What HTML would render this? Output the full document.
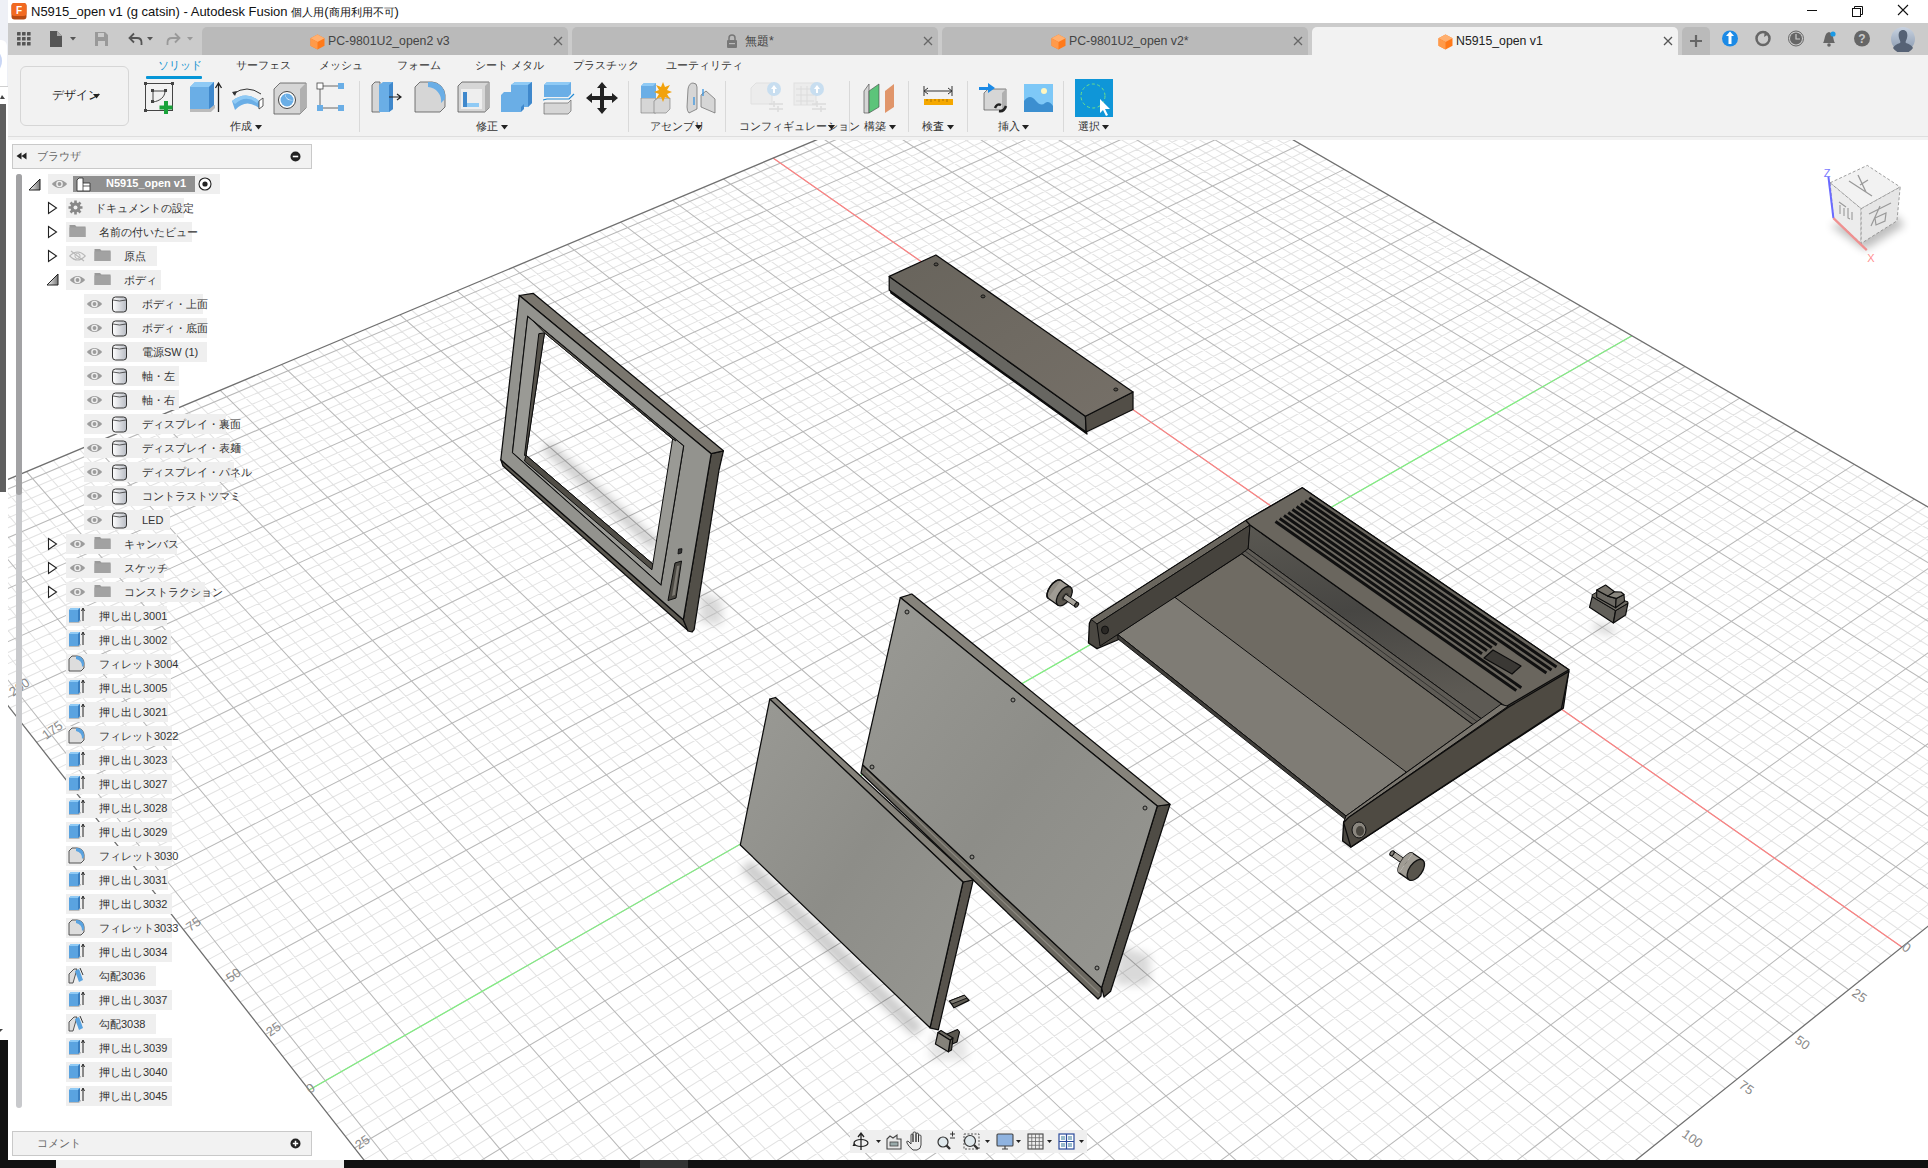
<!DOCTYPE html><html><head><meta charset="utf-8"><style>
html,body{margin:0;padding:0;width:1928px;height:1168px;overflow:hidden;background:#fff;font-family:"Liberation Sans",sans-serif}
.t{position:absolute;white-space:nowrap;line-height:1;font-family:"Liberation Sans",sans-serif}
</style></head><body>
<svg width="1928" height="1168" viewBox="0 0 1928 1168" style="position:absolute;left:0;top:0">
<defs><filter id="blur8" x="-50%" y="-50%" width="200%" height="200%"><feGaussianBlur stdDeviation="7"/></filter><filter id="blur4" x="-50%" y="-50%" width="200%" height="200%"><feGaussianBlur stdDeviation="4"/></filter><linearGradient id="gPanel" x1="0" y1="0" x2="1" y2="1"><stop offset="0" stop-color="#9a9a95"/><stop offset="0.5" stop-color="#8d8d88"/><stop offset="1" stop-color="#979792"/></linearGradient><linearGradient id="gKb" x1="0" y1="0" x2="1" y2="1"><stop offset="0" stop-color="#68645c"/><stop offset="1" stop-color="#767068"/></linearGradient><linearGradient id="gFloor" x1="0" y1="0" x2="1" y2="0.3"><stop offset="0" stop-color="#77736b"/><stop offset="1" stop-color="#817d76"/></linearGradient><linearGradient id="gBand" x1="0" y1="0" x2="0.2" y2="1"><stop offset="0" stop-color="#5a5852"/><stop offset="0.5" stop-color="#474643"/><stop offset="1" stop-color="#5d5a54"/></linearGradient></defs>
<path d="M-113.9 550.2L1107.7 32.6M-108.1 557.6L1115.3 37.0M-102.3 565.0L1122.9 41.4M-96.4 572.5L1130.5 45.8M-84.6 587.7L1145.9 54.7M-78.6 595.3L1153.7 59.2M-72.5 603.0L1161.5 63.7M-66.5 610.8L1169.4 68.3M-54.2 626.4L1185.2 77.4M-48.0 634.3L1193.2 82.1M-41.8 642.3L1201.2 86.7M-35.5 650.3L1209.3 91.3M-22.8 666.5L1225.5 100.7M-16.4 674.7L1233.7 105.5M-9.9 682.9L1241.9 110.2M-3.4 691.2L1250.2 115.0M9.7 708.0L1266.9 124.7M16.4 716.5L1275.3 129.5M23.1 725.0L1283.7 134.4M29.8 733.6L1292.2 139.3M43.4 751.0L1309.4 149.2M50.3 759.8L1318.0 154.2M57.2 768.6L1326.7 159.3M64.2 777.6L1335.4 164.3M78.4 795.6L1353.0 174.5M85.5 804.7L1361.9 179.6M92.7 813.9L1370.8 184.8M99.9 823.1L1379.8 190.0M114.6 841.8L1397.9 200.4M122.0 851.3L1407.0 205.7M129.4 860.8L1416.2 211.0M137.0 870.4L1425.5 216.4M152.2 889.8L1444.1 227.1M159.9 899.6L1453.5 232.6M167.6 909.5L1462.9 238.0M175.4 919.5L1472.4 243.5M191.2 939.6L1491.5 254.6M199.2 949.8L1501.2 260.2M207.3 960.1L1510.9 265.8M215.4 970.5L1520.7 271.4M231.8 991.4L1540.4 282.8M240.1 1002.0L1550.3 288.6M248.5 1012.7L1560.3 294.4M257.0 1023.5L1570.4 300.2M274.0 1045.3L1590.7 311.9M282.7 1056.4L1600.9 317.8M291.4 1067.5L1611.2 323.8M300.2 1078.7L1621.6 329.8M318.0 1101.4L1642.5 341.9M327.0 1112.9L1653.0 348.0M336.1 1124.5L1663.7 354.1M345.3 1136.2L1674.3 360.3M363.8 1159.9L1695.9 372.7M373.2 1171.9L1706.7 379.0M382.7 1184.0L1717.7 385.3M392.2 1196.1L1728.7 391.7M411.6 1220.8L1750.9 404.5M421.4 1233.3L1762.1 411.0M431.2 1246.0L1773.4 417.5M441.2 1258.7L1784.7 424.1M461.4 1284.5L1807.7 437.4M471.7 1297.5L1819.2 444.0M482.0 1310.7L1830.9 450.8M492.4 1324.0L1842.6 457.6M513.5 1350.9L1866.2 471.2M524.2 1364.6L1878.2 478.1M535.0 1378.4L1890.2 485.1M545.9 1392.3L1902.3 492.1M568.0 1420.4L1926.7 506.2M579.2 1434.7L1939.0 513.3M590.5 1449.1L1951.4 520.5M601.9 1463.7L1963.9 527.7M625.0 1493.2L1989.1 542.3M636.7 1508.2L2001.9 549.7M648.5 1523.3L2014.7 557.1M660.5 1538.5L2027.6 564.5M684.7 1569.4L2053.7 579.6M697.0 1585.1L2066.8 587.2M709.4 1601.0L2080.1 594.9M722.0 1617.0L2093.4 602.6M747.4 1649.4L2120.4 618.2M760.3 1665.9L2134.0 626.1M773.4 1682.6L2147.7 634.0M786.5 1699.4L2161.5 642.0M813.2 1733.5L2189.5 658.1M826.8 1750.8L2203.5 666.3M840.5 1768.3L2217.7 674.5M-97.1 523.7L890.3 1757.1M-83.1 517.8L908.1 1742.9M-69.2 511.9L925.7 1728.8M-55.3 506.1L943.2 1714.8M-27.7 494.5L977.7 1687.2M-14.1 488.8L994.8 1673.5M-0.5 483.1L1011.7 1660.0M13.0 477.4L1028.5 1646.5M39.9 466.1L1061.7 1620.0M53.2 460.5L1078.0 1606.8M66.4 455.0L1094.3 1593.8M79.6 449.4L1110.4 1580.9M105.7 438.4L1142.3 1555.4M118.7 433.0L1158.1 1542.7M131.6 427.6L1173.7 1530.2M144.5 422.2L1189.2 1517.8M170.0 411.5L1219.9 1493.2M182.6 406.2L1235.1 1481.1M195.2 400.9L1250.1 1469.0M207.7 395.6L1265.1 1457.1M232.6 385.2L1294.6 1433.4M245.0 380.0L1309.2 1421.7M257.2 374.8L1323.7 1410.1M269.5 369.7L1338.1 1398.6M293.7 359.5L1366.6 1375.8M305.8 354.4L1380.7 1364.5M317.7 349.4L1394.6 1353.3M329.7 344.4L1408.5 1342.2M353.3 334.4L1436.0 1320.2M365.1 329.5L1449.5 1309.4M376.8 324.6L1463.0 1298.6M388.4 319.7L1476.4 1287.8M411.5 310.0L1502.9 1266.6M423.0 305.2L1516.0 1256.1M434.4 300.4L1529.0 1245.7M445.8 295.6L1541.9 1235.4M468.4 286.1L1567.5 1214.9M479.6 281.4L1580.1 1204.8M490.7 276.7L1592.7 1194.7M501.8 272.1L1605.2 1184.7M523.9 262.8L1629.9 1165.0M534.8 258.2L1642.1 1155.2M545.7 253.7L1654.2 1145.5M556.5 249.1L1666.3 1135.8M578.1 240.1L1690.1 1116.7M588.8 235.6L1702.0 1107.2M599.4 231.1L1713.7 1097.8M610.0 226.6L1725.4 1088.5M631.0 217.8L1748.4 1070.0M641.5 213.4L1759.9 1060.8M651.9 209.0L1771.2 1051.8M662.3 204.7L1782.5 1042.7M682.8 196.1L1804.8 1024.8M693.0 191.8L1815.9 1016.0M703.2 187.5L1826.9 1007.2M713.3 183.2L1837.8 998.4M733.4 174.8L1859.4 981.1M743.4 170.6L1870.2 972.5M753.4 166.4L1880.8 964.0M763.3 162.3L1891.4 955.5M783.0 154.0L1912.3 938.8M792.7 149.9L1922.7 930.5M802.5 145.8L1933.0 922.2M812.1 141.7L1943.3 914.0M831.4 133.7L1963.6 897.7M840.9 129.6L1973.6 889.7M850.5 125.6L1983.6 881.7M859.9 121.7L1993.6 873.7M878.8 113.8L2013.2 858.0M888.1 109.8L2023.0 850.1M897.4 105.9L2032.7 842.4M906.7 102.0L2042.3 834.7M925.1 94.3L2061.4 819.4M934.3 90.4L2070.9 811.8M943.4 86.6L2080.3 804.3M952.5 82.8L2089.7 796.8M970.5 75.2L2108.2 781.9M979.5 71.5L2117.4 774.6M988.4 67.7L2126.5 767.3M997.3 64.0L2135.6 760.0M1015.0 56.6L2153.6 745.6M1023.7 52.9L2162.5 738.4M1032.5 49.2L2171.4 731.3M1041.2 45.5L2180.2 724.3M1058.5 38.3L2197.7 710.3M1067.1 34.7L2206.3 703.3M1075.6 31.1L2215.0 696.4M1084.2 27.5L2223.5 689.6" stroke="#e3e3e3" stroke-width="1.05" fill="none"/>
<path d="M-119.7 542.8L1100.1 28.3M-90.5 580.1L1138.2 50.3M-60.4 618.6L1177.3 72.9M-29.2 658.4L1217.4 96.0M3.1 699.6L1258.5 119.8M36.6 742.3L1300.8 144.3M71.3 786.5L1344.2 169.4M107.2 832.4L1388.8 195.2M144.5 880.1L1434.7 221.7M183.3 929.5L1481.9 249.0M223.6 980.9L1530.5 277.1M265.5 1034.4L1580.5 306.0M309.1 1090.0L1632.0 335.8M354.5 1148.0L1685.1 366.5M401.9 1208.4L1739.8 398.1M451.3 1271.5L1796.2 430.7M502.9 1337.4L1854.4 464.4M556.9 1406.3L1914.4 499.1M613.4 1478.4L1976.5 535.0M672.5 1553.9L2040.6 572.0M734.6 1633.1L2106.9 610.4M799.8 1716.3L2175.5 650.0M-111.2 529.6L872.4 1771.5M-41.5 500.3L960.5 1700.9M26.5 471.7L1045.1 1633.2M92.7 443.9L1126.4 1568.1M157.3 416.8L1204.6 1505.5M220.2 390.4L1279.9 1445.2M281.6 364.6L1352.4 1387.1M341.5 339.4L1422.3 1331.2M400.0 314.8L1489.7 1277.2M457.1 290.9L1554.7 1225.1M512.9 267.4L1617.6 1174.8M567.3 244.6L1678.3 1126.2M620.5 222.2L1736.9 1079.2M672.6 200.4L1793.7 1033.7M723.4 179.0L1848.7 989.7M773.1 158.1L1901.9 947.1M821.8 137.7L1953.4 905.8M869.4 117.7L2003.4 865.8M915.9 98.1L2051.9 827.0M961.5 79.0L2098.9 789.3M1006.1 60.3L2144.6 752.8M1049.8 41.9L2189.0 717.3" stroke="#b9b9b9" stroke-width="1.05" fill="none"/>
<path d="M773.1 158.1L1901.9 947.1" stroke="#ff8080" stroke-width="1.2"/>
<path d="M309.1 1090.0L1632.0 335.8" stroke="#80f080" stroke-width="1.2"/>
<path d="M-125.4 535.5L1092.6 23.9M854.4 1785.9L2232.0 682.8M-125.4 535.5L854.4 1785.9M1092.6 23.9L2232.0 682.8" stroke="#707070" stroke-width="1.3" fill="none"/>
<text x="13" y="697" font-family="Liberation Sans" font-size="13" fill="#8a8a8a" transform="rotate(-35 13 697)">200</text>
<text x="46" y="740" font-family="Liberation Sans" font-size="13" fill="#8a8a8a" transform="rotate(-35 46 740)">175</text>
<text x="190" y="932" font-family="Liberation Sans" font-size="13" fill="#8a8a8a" transform="rotate(-35 190 932)">75</text>
<text x="230" y="983" font-family="Liberation Sans" font-size="13" fill="#8a8a8a" transform="rotate(-35 230 983)">50</text>
<text x="270" y="1037" font-family="Liberation Sans" font-size="13" fill="#8a8a8a" transform="rotate(-35 270 1037)">25</text>
<text x="310" y="1094" font-family="Liberation Sans" font-size="13" fill="#8a8a8a" transform="rotate(-35 310 1094)">0</text>
<text x="359" y="1150" font-family="Liberation Sans" font-size="13" fill="#8a8a8a" transform="rotate(-35 359 1150)">25</text>
<text x="1901" y="949" font-family="Liberation Sans" font-size="13" fill="#8a8a8a" transform="rotate(35 1901 949)">0</text>
<text x="1851" y="995" font-family="Liberation Sans" font-size="13" fill="#8a8a8a" transform="rotate(35 1851 995)">25</text>
<text x="1794" y="1042" font-family="Liberation Sans" font-size="13" fill="#8a8a8a" transform="rotate(35 1794 1042)">50</text>
<text x="1738" y="1087" font-family="Liberation Sans" font-size="13" fill="#8a8a8a" transform="rotate(35 1738 1087)">75</text>
<text x="1681" y="1136" font-family="Liberation Sans" font-size="13" fill="#8a8a8a" transform="rotate(35 1681 1136)">100</text>
<g fill="#000" filter="url(#blur4)">
<path d="M750.6 859.4L923.6 1026.4L913.9 1036.5L740.9 869.5Z" opacity="0.2"/>
<path d="M542.0 449.8L652.0 549.8L659.4 541.6L549.4 441.6Z" opacity="0.2"/>
<path d="M700 592L722 600L722 625L700 622Z" opacity="0.15"/>
<path d="M1118 945L1150 955L1150 985L1115 985Z" opacity="0.15"/>
<path d="M1595 622L1618 628L1610 636L1592 630Z" opacity="0.15"/>
<path d="M930 1035L965 1035L968 1060L930 1060Z" opacity="0.1"/>
</g>
<path d="M500.8 459.7L683.3 619.7L688.0 630.5L503.0 466.0Z" fill="#5c5951" stroke="#0c0c0c" stroke-width="1.25" stroke-linejoin="round" />
<path d="M711.2 453.7L723.4 450.8L719.0 470.0L694.1 629.6L692.0 632.0L688.0 631.0L683.3 619.7Z" fill="#524f48" stroke="#0c0c0c" stroke-width="1.25" stroke-linejoin="round" />
<path d="M519.3 295.5L533.1 293.3L723.4 450.8L711.2 453.7Z" fill="#7a766e" stroke="#0c0c0c" stroke-width="1.25" stroke-linejoin="round" />
<path d="M519.3 295.5L711.2 453.7L683.3 619.7L500.8 459.7ZM527.7 316.6L683.6 445.9L660.9 584.7L512.5 452.5Z" fill="#93938e" fill-rule="evenodd" stroke="#0c0c0c" stroke-width="1.25"/>
<path d="M527.7 316.6L683.6 445.9L660.9 584.7L512.5 452.5ZM544.5 332.9L672.6 439.0L652.8 564.0L526.0 455.2Z" fill="#9a9a95" fill-rule="evenodd" stroke="#0c0c0c" stroke-width="1"/>
<path d="M538.8 333.7L544.5 332.9L526.0 455.2L524.5 455.5Z" fill="#55524b" stroke="#0c0c0c" stroke-width="1" stroke-linejoin="round" />
<path d="M526.0 455.2L652.8 564.0L651.9 569.8L524.5 461.0Z" fill="#504d46" stroke="#0c0c0c" stroke-width="1" stroke-linejoin="round" />
<path d="M533.0 321.0L544.5 332.9L672.6 439.0L676.0 441.0Z" fill="#6a675f" stroke="#0c0c0c" stroke-width="0.8" stroke-linejoin="round" />
<path d="M675.0 563.0L681.5 561.0L676.0 598.0L668.0 600.5Z" fill="#4a4842" stroke="#0c0c0c" stroke-width="1" stroke-linejoin="round" />
<path d="M677.0 566.0L679.5 565.5L675.0 595.0L672.0 596.0Z" fill="#7d7a73" stroke="none" stroke-width="0" stroke-linejoin="round" />
<path d="M678.5 549.0L682.0 548.7L681.5 553.0L678.0 554.0Z" fill="#333" stroke="#0c0c0c" stroke-width="0.8" stroke-linejoin="round" />
<path d="M890.0 289.0L1086.0 431.0L1087.0 434.0L891.0 293.0Z" fill="#111" stroke="#0c0c0c" stroke-width="1.35" stroke-linejoin="round" />
<path d="M889.2 276.4L1085.4 416.2L1086.2 432.0L889.2 290.1Z" fill="#676661" stroke="#0c0c0c" stroke-width="1.25" stroke-linejoin="round" />
<path d="M1085.4 416.2L1133.0 392.0L1133.0 409.5L1086.2 432.0Z" fill="#524e47" stroke="#0c0c0c" stroke-width="1.25" stroke-linejoin="round" />
<path d="M889.2 276.4L935.9 255.0L1133.0 392.0L1085.4 416.2Z" fill="url(#gKb)" stroke="#0c0c0c" stroke-width="1.25" stroke-linejoin="round" />
<ellipse cx="936.1" cy="264.4" rx="2" ry="1.5" fill="#55524b" stroke="#0c0c0c" stroke-width="0.9"/>
<ellipse cx="983.0" cy="296.4" rx="2" ry="1.5" fill="#55524b" stroke="#0c0c0c" stroke-width="0.9"/>
<ellipse cx="1115.8" cy="389.5" rx="2" ry="1.5" fill="#55524b" stroke="#0c0c0c" stroke-width="0.9"/>
<path d="M862.6 764.7L1101.6 987.6L1101.0 996.0L1098.0 999.0L861.0 773.0L862.0 768.0Z" fill="#6a675f" stroke="#0c0c0c" stroke-width="1.25" stroke-linejoin="round" />
<path d="M866.0 771.0L1099.0 993.0" stroke="#8a877f" stroke-width="1.2" fill="none"/>
<path d="M1157.3 806.0L1170.0 804.3L1110.6 991.2L1104.0 997.0L1101.6 987.6Z" fill="#4f4c45" stroke="#0c0c0c" stroke-width="1.25" stroke-linejoin="round" />
<path d="M900.3 597.6L911.8 594.0L1170.0 804.3L1157.3 806.0Z" fill="#86837b" stroke="#0c0c0c" stroke-width="1.25" stroke-linejoin="round" />
<path d="M900.3 597.6L1157.3 806.0L1101.6 987.6L862.6 764.7Z" fill="url(#gPanel)" stroke="#0c0c0c" stroke-width="1.25" stroke-linejoin="round" />
<circle cx="907.0" cy="612.0" r="2" fill="#8a8a85" stroke="#0c0c0c" stroke-width="0.9"/>
<circle cx="1013.0" cy="700.0" r="2" fill="#8a8a85" stroke="#0c0c0c" stroke-width="0.9"/>
<circle cx="1145.0" cy="808.0" r="2" fill="#8a8a85" stroke="#0c0c0c" stroke-width="0.9"/>
<circle cx="872.0" cy="767.0" r="2" fill="#8a8a85" stroke="#0c0c0c" stroke-width="0.9"/>
<circle cx="972.0" cy="857.0" r="2" fill="#8a8a85" stroke="#0c0c0c" stroke-width="0.9"/>
<circle cx="1097.0" cy="968.0" r="2" fill="#8a8a85" stroke="#0c0c0c" stroke-width="0.9"/>
<path d="M963.0 882.0L973.2 880.0L938.3 1029.9L930.0 1027.8Z" fill="#57534c" stroke="#0c0c0c" stroke-width="1.25" stroke-linejoin="round" />
<path d="M769.8 699.1L775.5 697.5L973.2 880.0L963.0 882.0Z" fill="#86837b" stroke="#0c0c0c" stroke-width="1.25" stroke-linejoin="round" />
<path d="M769.8 699.1L963.0 882.0L930.0 1027.8L740.3 845.0Z" fill="url(#gPanel)" stroke="#0c0c0c" stroke-width="1.25" stroke-linejoin="round" />
<path d="M1091.3 619.4L1245.8 520.5L1302.3 487.8L1568.9 669.8L1563.3 708.1L1350.8 847.1L1342.6 841.0L1343.6 822.5L1346.0 818.0L1120.0 639.0L1097.0 648.6L1088.5 643.0L1089.4 623.2Z" fill="#4b4842" stroke="#0c0c0c" stroke-width="1.35" stroke-linejoin="round" />
<path d="M1117.7 634.5L1241.8 553.6L1473.2 724.6L1346.0 816.0Z" fill="#6f6b63" stroke="#0c0c0c" stroke-width="1.25" stroke-linejoin="round" />
<path d="M1117.7 634.5L1174.2 596.8L1406.3 772.1L1346.0 816.0Z" fill="#7f7c75" stroke="#0c0c0c" stroke-width="1" stroke-linejoin="round" />
<path d="M1117.7 634.5L1346.0 816.0L1346.0 820.0L1118.0 639.0Z" fill="#3f3d39" stroke="#0c0c0c" stroke-width="0.9" stroke-linejoin="round" />
<path d="M1091.3 619.4L1245.8 520.5L1250.0 525.0L1097.0 624.0Z" fill="#6a665e" stroke="#0c0c0c" stroke-width="1" stroke-linejoin="round" />
<path d="M1097.0 624.0L1250.0 525.0L1248.2 548.5L1241.8 553.6L1117.7 634.5L1100.0 646.0Z" fill="#46433d" stroke="#0c0c0c" stroke-width="1" stroke-linejoin="round" />
<path d="M1250.0 525.0L1505.7 706.8L1481.3 718.7L1248.2 548.5Z" fill="url(#gBand)" stroke="#0c0c0c" stroke-width="1" stroke-linejoin="round" />
<path d="M1248.2 548.5L1481.3 718.7L1473.2 724.6L1241.8 553.6Z" fill="#5e5b55" stroke="#0c0c0c" stroke-width="0.9" stroke-linejoin="round" />
<path d="M1245.0 551.0L1477.0 721.5" stroke="#222" stroke-width="0.7" fill="none"/>
<path d="M1245.8 520.5L1302.3 487.8L1568.9 669.8L1505.7 706.8L1250.0 525.0Z" fill="#6a665e" stroke="#0c0c0c" stroke-width="1.25" stroke-linejoin="round" />
<path d="M1309.3 497.7L1556.5 666.9" stroke="#101010" stroke-width="3" fill="none"/>
<path d="M1305.1 500.7L1551.5 669.9" stroke="#101010" stroke-width="3" fill="none"/>
<path d="M1300.8 503.6L1546.4 672.9" stroke="#101010" stroke-width="3" fill="none"/>
<path d="M1296.6 506.6L1496.7 644.9" stroke="#101010" stroke-width="3" fill="none"/>
<path d="M1292.4 509.6L1491.8 647.8" stroke="#101010" stroke-width="3" fill="none"/>
<path d="M1288.2 512.6L1486.9 650.8" stroke="#101010" stroke-width="3" fill="none"/>
<path d="M1284.0 515.5L1482.0 653.8" stroke="#101010" stroke-width="3" fill="none"/>
<path d="M1279.7 518.5L1521.3 687.7" stroke="#101010" stroke-width="3" fill="none"/>
<path d="M1275.5 521.5L1516.3 690.6" stroke="#101010" stroke-width="3" fill="none"/>
<path d="M1493.0 650.0L1521.0 666.0L1512.0 674.0L1484.0 658.0Z" fill="#3a3834" stroke="#0c0c0c" stroke-width="1.25" stroke-linejoin="round" />
<path d="M1500.9 704.3L1508.0 706.3L1348.8 817.3L1343.6 822.5L1346.0 816.0Z" fill="#7a766e" stroke="#0c0c0c" stroke-width="1" stroke-linejoin="round" />
<path d="M1508.0 707.4L1568.9 671.4L1561.5 708.4L1350.8 847.1L1343.6 822.5L1348.8 817.3Z" fill="#4e4a42" stroke="#0c0c0c" stroke-width="1.25" stroke-linejoin="round" />
<ellipse cx="1105" cy="630" rx="3.5" ry="4" fill="#2a2825" stroke="#0c0c0c" stroke-width="0.9"/>
<ellipse cx="1359" cy="830" rx="7" ry="8" fill="#8a867e" stroke="#111" stroke-width="1"/><ellipse cx="1360" cy="831" rx="4" ry="5" fill="#4a4740"/>
<g transform="translate(1064.3,596.2) rotate(35)"><path d="M-12 -11H0V11H-12Z" fill="#9b978f"/><ellipse cx="-12" cy="0" rx="5" ry="11" fill="#8f8b83" stroke="#111" stroke-width="1.3"/><path d="M-12 -11H0V11H-12Z" fill="#a09c94"/><path d="M-12 -11H0M-12 11H0" stroke="#111" stroke-width="1.3"/><path d="M-17 0A5 11 0 0 1 -12 -11" fill="none" stroke="#111" stroke-width="1.3"/><path d="M-17 0A5 11 0 0 0 -12 11" fill="none" stroke="#111" stroke-width="1.3"/><ellipse cx="0" cy="0" rx="6" ry="11" fill="#5a564e" stroke="#111" stroke-width="1.3"/><ellipse cx="1" cy="0" rx="2.5" ry="4.5" fill="#3a3833"/><path d="M0 -2.5H15V2.5H0Z" fill="#a8a49c" stroke="#111" stroke-width="0.9"/><ellipse cx="15" cy="0" rx="1.6" ry="2.6" fill="#5a564e" stroke="#111" stroke-width="1.1"/></g>
<g transform="translate(1415.8,869.9) rotate(35)"><path d="M-29 -2.6H-12V2.6H-29Z" fill="#a8a49c" stroke="#111" stroke-width="0.9"/><ellipse cx="-29" cy="0" rx="1.8" ry="2.8" fill="#8a867e" stroke="#111" stroke-width="1.1"/><path d="M-12 -12H0V12H-12Z" fill="#a09c94"/><path d="M-12 -12H0M-12 12H0" stroke="#111" stroke-width="1.3"/><path d="M-17 0A5 12 0 0 1 -12 -12" fill="#a09c94" stroke="#111" stroke-width="1.3"/><path d="M-17 0A5 12 0 0 0 -12 12" fill="#a09c94" stroke="#111" stroke-width="1.3"/><path d="M-17 0A5 12 0 0 1 -12 -12V12A5 12 0 0 1 -17 0Z" fill="#a09c94"/><ellipse cx="0" cy="0" rx="6.5" ry="12" fill="#58544c" stroke="#111" stroke-width="1.3"/></g>
<path d="M1592.2 596.7L1615.6 610.6L1613.4 622.9L1589.5 607.3Z" fill="#62605a" stroke="#0c0c0c" stroke-width="1.2" stroke-linejoin="round" />
<path d="M1615.6 610.6L1627.9 603.3L1625.6 615.1L1613.4 622.9Z" fill="#585550" stroke="#0c0c0c" stroke-width="1.2" stroke-linejoin="round" />
<path d="M1592.2 594.8L1597.0 592.0L1627.9 601.8L1627.9 603.3L1615.6 610.6L1592.2 596.7Z" fill="#6e6b63" stroke="#0c0c0c" stroke-width="1" stroke-linejoin="round" />
<path d="M1596.7 590.0L1607.8 596.1L1616.2 598.4L1615.6 607.8L1596.7 597.3Z" fill="#6b6862" stroke="#0c0c0c" stroke-width="1.1" stroke-linejoin="round" />
<path d="M1616.2 598.4L1624.0 594.5L1624.5 601.2L1615.6 607.8Z" fill="#65625b" stroke="#0c0c0c" stroke-width="1.1" stroke-linejoin="round" />
<path d="M1596.7 590.0L1605.6 585.0L1614.5 591.7L1607.8 596.1Z" fill="#77736b" stroke="#0c0c0c" stroke-width="1.1" stroke-linejoin="round" />
<path d="M1607.8 596.1L1614.5 591.7L1621.0 592.0L1624.0 594.5L1616.2 598.4Z" fill="#8a877f" stroke="#0c0c0c" stroke-width="1.1" stroke-linejoin="round" />
<path d="M949.5 1001.0L964.3 995.3L969.1 1000.4L954.0 1007.8Z" fill="#5e5b53" stroke="#0c0c0c" stroke-width="1.2" stroke-linejoin="round" />
<path d="M949.5 1001.0L964.3 995.3L967.0 998.0L952.0 1004.0Z" fill="#7d7a72" stroke="#0c0c0c" stroke-width="0.9" stroke-linejoin="round" />
<path d="M947.0 1034.0L957.5 1029.5L959.5 1032.0L957.0 1042.0L951.0 1044.5Z" fill="#5a574f" stroke="#0c0c0c" stroke-width="1.1" stroke-linejoin="round" />
<path d="M938.0 1032.5L941.0 1030.5L953.0 1038.0L950.2 1040.2Z" fill="#6e6b63" stroke="#0c0c0c" stroke-width="1.1" stroke-linejoin="round" />
<path d="M950.2 1040.2L953.0 1038.0L951.5 1050.0L948.3 1051.8Z" fill="#5a574f" stroke="#0c0c0c" stroke-width="1.1" stroke-linejoin="round" />
<path d="M938.0 1032.5L950.2 1040.2L948.3 1051.8L935.4 1044.1Z" fill="#85827a" stroke="#0c0c0c" stroke-width="1.2" stroke-linejoin="round" />
<g filter="url(#blur4)" opacity="0.25"><path d="M1830 225L1865 250L1905 225L1895 215Z" fill="#000"/></g>
<path d="M1830.1 182.8L1867.3 165.4L1900.2 187.0L1861.1 208.7Z" fill="#f2f2f2" stroke="#888" stroke-width="0.8" stroke-linejoin="round" stroke-dasharray="3 2"/>
<path d="M1830.1 182.8L1861.1 208.7L1861.1 243.5L1833.4 218.1Z" fill="#ececec" stroke="#888" stroke-width="0.8" stroke-linejoin="round" stroke-dasharray="3 2"/>
<path d="M1861.1 208.7L1900.2 187.0L1896.9 220.9L1861.1 243.5Z" fill="#e6e6e6" stroke="#888" stroke-width="0.8" stroke-linejoin="round" stroke-dasharray="3 2"/>
<path d="M1849 181L1872 196M1858 175L1866 192M1860 185L1868 180" stroke="#999" stroke-width="1.3" fill="none"/>
<path d="M1839 202L1846 207M1840 205V214M1844 208V216M1848 208V218L1850 219M1852 212V220" stroke="#999" stroke-width="1.1" fill="none"/>
<path d="M1869 214L1891 203M1880 206L1871 226M1875 218L1886 213L1885 221L1876 225Z" stroke="#999" stroke-width="1.2" fill="none"/>
<path d="M1833.4 218.1L1828.4 176.7" stroke="#6a6aff" stroke-width="2" fill="none"/>
<path d="M1833.4 218.1L1866.8 250.1" stroke="#f09090" stroke-width="2.2" fill="none"/>
<text x="1827" y="177" font-family="Liberation Sans" font-size="11" fill="#7a7aff" text-anchor="middle">Z</text>
<text x="1871" y="262" font-family="Liberation Sans" font-size="11" fill="#ff9090" text-anchor="middle">X</text>
</svg>
<div style="position:absolute;left:12px;top:144px;width:300px;height:25px;background:#f2f2f2;border:1px solid #c9c9c9;box-sizing:border-box"></div>
<svg width="12" height="8" viewBox="0 0 12 8" style="position:absolute;left:16px;top:152px"><path d="M0.5 4L5.5 0.5V7.5Z M5.5 4L10.5 0.5V7.5Z" fill="#222"/></svg>
<div class="t" style="left:37px;top:151px;font-size:11px;color:#666">ブラウザ</div>
<svg width="11" height="11" viewBox="0 0 11 11" style="position:absolute;left:290px;top:151px"><circle cx="5.5" cy="5.5" r="5" fill="#222"/><path d="M2.8 5.5H8.2" stroke="#fff" stroke-width="1.6"/></svg>
<div style="position:absolute;left:16px;top:174px;width:6px;height:934px;background:#c8c9cc;border-radius:3px"></div>
<div style="position:absolute;left:16px;top:174px;width:6px;height:321px;background:#a2a2a4;border-radius:3px"></div>
<svg width="13" height="13" viewBox="0 0 13 13" style="position:absolute;left:28px;top:178px"><defs><linearGradient id="tg" x1="0" x2="1"><stop offset="0" stop-color="#fff"/><stop offset="1" stop-color="#777"/></linearGradient></defs><path d="M1 12L12 1V12Z" fill="url(#tg)" stroke="#222" stroke-width="1"/></svg>
<div style="position:absolute;left:48px;top:174px;width:172px;height:20px;background:#efefef"></div>
<svg width="17" height="12" viewBox="0 0 17 12" style="position:absolute;left:51px;top:178px"><path d="M0.8 6Q8.5 -2 16.2 6Q8.5 14 0.8 6Z" fill="#9c9c9c"/><circle cx="8.5" cy="6" r="3.3" fill="#efefef"/><circle cx="8.5" cy="6" r="1.9" fill="#9c9c9c"/></svg>
<div style="position:absolute;left:73px;top:176px;width:122px;height:16px;background:#909090"></div>
<svg width="16" height="15" viewBox="0 0 16 15" style="position:absolute;left:76px;top:177px"><path d="M1 14V3L3 1H7V6H14V14Z" fill="#fff" stroke="#333" stroke-width="0.9"/><path d="M7 6V14M7 9H14" stroke="#333" stroke-width="0.8"/></svg>
<div class="t" style="left:106px;top:178px;font-size:11px;font-weight:bold;color:#fff">N5915_open v1</div>
<svg width="14" height="14" viewBox="0 0 14 14" style="position:absolute;left:198px;top:177px"><circle cx="7" cy="7" r="6" fill="#fff" stroke="#222" stroke-width="1.1"/><circle cx="7" cy="7" r="2.6" fill="#222"/></svg>
<div style="position:absolute;left:66px;top:198px;width:118px;height:20px;background:#efefef"></div>
<svg width="11" height="14" viewBox="0 0 11 14" style="position:absolute;left:47px;top:201px"><path d="M1.5 1.5L9.5 7L1.5 12.5Z" fill="#fff" stroke="#222" stroke-width="1.1"/></svg>
<svg width="15" height="15" viewBox="0 0 15 15" style="position:absolute;left:68px;top:200px"><circle cx="7.5" cy="7.5" r="5" fill="#888"/><g stroke="#888" stroke-width="2.6"><path d="M7.5 0.5V14.5M0.5 7.5H14.5M2.5 2.5L12.5 12.5M12.5 2.5L2.5 12.5"/></g><circle cx="7.5" cy="7.5" r="2" fill="#efefef"/></svg>
<div class="t" style="left:95px;top:203px;font-size:11px;color:#333">ドキュメントの設定</div>
<div style="position:absolute;left:66px;top:222px;width:126px;height:20px;background:#efefef"></div>
<svg width="11" height="14" viewBox="0 0 11 14" style="position:absolute;left:47px;top:225px"><path d="M1.5 1.5L9.5 7L1.5 12.5Z" fill="#fff" stroke="#222" stroke-width="1.1"/></svg>
<svg width="17" height="14" viewBox="0 0 17 14" style="position:absolute;left:69px;top:224px"><path d="M0.5 1H6L7.5 2.5H16.5V13H0.5Z" fill="#999"/><path d="M0.5 3.5H16.5V13H0.5Z" fill="#a2a2a2"/></svg>
<div class="t" style="left:99px;top:227px;font-size:11px;color:#333">名前の付いたビュー</div>
<div style="position:absolute;left:66px;top:246px;width:91px;height:20px;background:#efefef"></div>
<svg width="11" height="14" viewBox="0 0 11 14" style="position:absolute;left:47px;top:249px"><path d="M1.5 1.5L9.5 7L1.5 12.5Z" fill="#fff" stroke="#222" stroke-width="1.1"/></svg>
<svg width="17" height="12" viewBox="0 0 17 12" style="position:absolute;left:69px;top:250px"><path d="M0.8 6Q8.5 -2 16.2 6Q8.5 14 0.8 6Z" fill="none" stroke="#b8b8b8" stroke-width="1.1"/><circle cx="8.5" cy="6" r="2.6" fill="none" stroke="#b8b8b8"/><path d="M2 1L15 11" stroke="#b8b8b8" stroke-width="1.1"/></svg>
<svg width="17" height="14" viewBox="0 0 17 14" style="position:absolute;left:94px;top:248px"><path d="M0.5 1H6L7.5 2.5H16.5V13H0.5Z" fill="#999"/><path d="M0.5 3.5H16.5V13H0.5Z" fill="#a2a2a2"/></svg>
<div class="t" style="left:124px;top:251px;font-size:11px;color:#333">原点</div>
<div style="position:absolute;left:66px;top:270px;width:95px;height:20px;background:#efefef"></div>
<svg width="13" height="13" viewBox="0 0 13 13" style="position:absolute;left:46px;top:273px"><defs><linearGradient id="tg" x1="0" x2="1"><stop offset="0" stop-color="#fff"/><stop offset="1" stop-color="#777"/></linearGradient></defs><path d="M1 12L12 1V12Z" fill="url(#tg)" stroke="#222" stroke-width="1"/></svg>
<svg width="17" height="12" viewBox="0 0 17 12" style="position:absolute;left:69px;top:274px"><path d="M0.8 6Q8.5 -2 16.2 6Q8.5 14 0.8 6Z" fill="#9c9c9c"/><circle cx="8.5" cy="6" r="3.3" fill="#efefef"/><circle cx="8.5" cy="6" r="1.9" fill="#9c9c9c"/></svg>
<svg width="17" height="14" viewBox="0 0 17 14" style="position:absolute;left:94px;top:272px"><path d="M0.5 1H6L7.5 2.5H16.5V13H0.5Z" fill="#999"/><path d="M0.5 3.5H16.5V13H0.5Z" fill="#a2a2a2"/></svg>
<div class="t" style="left:124px;top:275px;font-size:11px;color:#333">ボディ</div>
<div style="position:absolute;left:84px;top:294px;width:119px;height:20px;background:#efefef"></div>
<svg width="17" height="12" viewBox="0 0 17 12" style="position:absolute;left:86px;top:298px"><path d="M0.8 6Q8.5 -2 16.2 6Q8.5 14 0.8 6Z" fill="#9c9c9c"/><circle cx="8.5" cy="6" r="3.3" fill="#efefef"/><circle cx="8.5" cy="6" r="1.9" fill="#9c9c9c"/></svg>
<svg width="17" height="17" viewBox="0 0 17 17" style="position:absolute;left:111px;top:296px"><defs><linearGradient id="bg4" x1="0" x2="1"><stop offset="0" stop-color="#fff"/><stop offset="1" stop-color="#b8bcc4"/></linearGradient></defs><rect x="1.5" y="1" width="14" height="15" rx="3" fill="url(#bg4)" stroke="#333" stroke-width="1"/><path d="M2 4Q8.5 6 15 4" fill="none" stroke="#333" stroke-width="0.8"/></svg>
<div class="t" style="left:142px;top:299px;font-size:11px;color:#333">ボディ・上面</div>
<div style="position:absolute;left:84px;top:318px;width:123px;height:20px;background:#efefef"></div>
<svg width="17" height="12" viewBox="0 0 17 12" style="position:absolute;left:86px;top:322px"><path d="M0.8 6Q8.5 -2 16.2 6Q8.5 14 0.8 6Z" fill="#9c9c9c"/><circle cx="8.5" cy="6" r="3.3" fill="#efefef"/><circle cx="8.5" cy="6" r="1.9" fill="#9c9c9c"/></svg>
<svg width="17" height="17" viewBox="0 0 17 17" style="position:absolute;left:111px;top:320px"><defs><linearGradient id="bg5" x1="0" x2="1"><stop offset="0" stop-color="#fff"/><stop offset="1" stop-color="#b8bcc4"/></linearGradient></defs><rect x="1.5" y="1" width="14" height="15" rx="3" fill="url(#bg5)" stroke="#333" stroke-width="1"/><path d="M2 4Q8.5 6 15 4" fill="none" stroke="#333" stroke-width="0.8"/></svg>
<div class="t" style="left:142px;top:323px;font-size:11px;color:#333">ボディ・底面</div>
<div style="position:absolute;left:84px;top:342px;width:123px;height:20px;background:#efefef"></div>
<svg width="17" height="12" viewBox="0 0 17 12" style="position:absolute;left:86px;top:346px"><path d="M0.8 6Q8.5 -2 16.2 6Q8.5 14 0.8 6Z" fill="#9c9c9c"/><circle cx="8.5" cy="6" r="3.3" fill="#efefef"/><circle cx="8.5" cy="6" r="1.9" fill="#9c9c9c"/></svg>
<svg width="17" height="17" viewBox="0 0 17 17" style="position:absolute;left:111px;top:344px"><defs><linearGradient id="bg6" x1="0" x2="1"><stop offset="0" stop-color="#fff"/><stop offset="1" stop-color="#b8bcc4"/></linearGradient></defs><rect x="1.5" y="1" width="14" height="15" rx="3" fill="url(#bg6)" stroke="#333" stroke-width="1"/><path d="M2 4Q8.5 6 15 4" fill="none" stroke="#333" stroke-width="0.8"/></svg>
<div class="t" style="left:142px;top:347px;font-size:11px;color:#333">電源SW (1)</div>
<div style="position:absolute;left:84px;top:366px;width:95px;height:20px;background:#efefef"></div>
<svg width="17" height="12" viewBox="0 0 17 12" style="position:absolute;left:86px;top:370px"><path d="M0.8 6Q8.5 -2 16.2 6Q8.5 14 0.8 6Z" fill="#9c9c9c"/><circle cx="8.5" cy="6" r="3.3" fill="#efefef"/><circle cx="8.5" cy="6" r="1.9" fill="#9c9c9c"/></svg>
<svg width="17" height="17" viewBox="0 0 17 17" style="position:absolute;left:111px;top:368px"><defs><linearGradient id="bg7" x1="0" x2="1"><stop offset="0" stop-color="#fff"/><stop offset="1" stop-color="#b8bcc4"/></linearGradient></defs><rect x="1.5" y="1" width="14" height="15" rx="3" fill="url(#bg7)" stroke="#333" stroke-width="1"/><path d="M2 4Q8.5 6 15 4" fill="none" stroke="#333" stroke-width="0.8"/></svg>
<div class="t" style="left:142px;top:371px;font-size:11px;color:#333">軸・左</div>
<div style="position:absolute;left:84px;top:390px;width:95px;height:20px;background:#efefef"></div>
<svg width="17" height="12" viewBox="0 0 17 12" style="position:absolute;left:86px;top:394px"><path d="M0.8 6Q8.5 -2 16.2 6Q8.5 14 0.8 6Z" fill="#9c9c9c"/><circle cx="8.5" cy="6" r="3.3" fill="#efefef"/><circle cx="8.5" cy="6" r="1.9" fill="#9c9c9c"/></svg>
<svg width="17" height="17" viewBox="0 0 17 17" style="position:absolute;left:111px;top:392px"><defs><linearGradient id="bg8" x1="0" x2="1"><stop offset="0" stop-color="#fff"/><stop offset="1" stop-color="#b8bcc4"/></linearGradient></defs><rect x="1.5" y="1" width="14" height="15" rx="3" fill="url(#bg8)" stroke="#333" stroke-width="1"/><path d="M2 4Q8.5 6 15 4" fill="none" stroke="#333" stroke-width="0.8"/></svg>
<div class="t" style="left:142px;top:395px;font-size:11px;color:#333">軸・右</div>
<div style="position:absolute;left:84px;top:414px;width:142px;height:20px;background:#efefef"></div>
<svg width="17" height="12" viewBox="0 0 17 12" style="position:absolute;left:86px;top:418px"><path d="M0.8 6Q8.5 -2 16.2 6Q8.5 14 0.8 6Z" fill="#9c9c9c"/><circle cx="8.5" cy="6" r="3.3" fill="#efefef"/><circle cx="8.5" cy="6" r="1.9" fill="#9c9c9c"/></svg>
<svg width="17" height="17" viewBox="0 0 17 17" style="position:absolute;left:111px;top:416px"><defs><linearGradient id="bg9" x1="0" x2="1"><stop offset="0" stop-color="#fff"/><stop offset="1" stop-color="#b8bcc4"/></linearGradient></defs><rect x="1.5" y="1" width="14" height="15" rx="3" fill="url(#bg9)" stroke="#333" stroke-width="1"/><path d="M2 4Q8.5 6 15 4" fill="none" stroke="#333" stroke-width="0.8"/></svg>
<div class="t" style="left:142px;top:419px;font-size:11px;color:#333">ディスプレイ・裏面</div>
<div style="position:absolute;left:84px;top:438px;width:146px;height:20px;background:#efefef"></div>
<svg width="17" height="12" viewBox="0 0 17 12" style="position:absolute;left:86px;top:442px"><path d="M0.8 6Q8.5 -2 16.2 6Q8.5 14 0.8 6Z" fill="#9c9c9c"/><circle cx="8.5" cy="6" r="3.3" fill="#efefef"/><circle cx="8.5" cy="6" r="1.9" fill="#9c9c9c"/></svg>
<svg width="17" height="17" viewBox="0 0 17 17" style="position:absolute;left:111px;top:440px"><defs><linearGradient id="bg10" x1="0" x2="1"><stop offset="0" stop-color="#fff"/><stop offset="1" stop-color="#b8bcc4"/></linearGradient></defs><rect x="1.5" y="1" width="14" height="15" rx="3" fill="url(#bg10)" stroke="#333" stroke-width="1"/><path d="M2 4Q8.5 6 15 4" fill="none" stroke="#333" stroke-width="0.8"/></svg>
<div class="t" style="left:142px;top:443px;font-size:11px;color:#333">ディスプレイ・表麺</div>
<div style="position:absolute;left:84px;top:462px;width:150px;height:20px;background:#efefef"></div>
<svg width="17" height="12" viewBox="0 0 17 12" style="position:absolute;left:86px;top:466px"><path d="M0.8 6Q8.5 -2 16.2 6Q8.5 14 0.8 6Z" fill="#9c9c9c"/><circle cx="8.5" cy="6" r="3.3" fill="#efefef"/><circle cx="8.5" cy="6" r="1.9" fill="#9c9c9c"/></svg>
<svg width="17" height="17" viewBox="0 0 17 17" style="position:absolute;left:111px;top:464px"><defs><linearGradient id="bg11" x1="0" x2="1"><stop offset="0" stop-color="#fff"/><stop offset="1" stop-color="#b8bcc4"/></linearGradient></defs><rect x="1.5" y="1" width="14" height="15" rx="3" fill="url(#bg11)" stroke="#333" stroke-width="1"/><path d="M2 4Q8.5 6 15 4" fill="none" stroke="#333" stroke-width="0.8"/></svg>
<div class="t" style="left:142px;top:467px;font-size:11px;color:#333">ディスプレイ・パネル</div>
<div style="position:absolute;left:84px;top:486px;width:138px;height:20px;background:#efefef"></div>
<svg width="17" height="12" viewBox="0 0 17 12" style="position:absolute;left:86px;top:490px"><path d="M0.8 6Q8.5 -2 16.2 6Q8.5 14 0.8 6Z" fill="#9c9c9c"/><circle cx="8.5" cy="6" r="3.3" fill="#efefef"/><circle cx="8.5" cy="6" r="1.9" fill="#9c9c9c"/></svg>
<svg width="17" height="17" viewBox="0 0 17 17" style="position:absolute;left:111px;top:488px"><defs><linearGradient id="bg12" x1="0" x2="1"><stop offset="0" stop-color="#fff"/><stop offset="1" stop-color="#b8bcc4"/></linearGradient></defs><rect x="1.5" y="1" width="14" height="15" rx="3" fill="url(#bg12)" stroke="#333" stroke-width="1"/><path d="M2 4Q8.5 6 15 4" fill="none" stroke="#333" stroke-width="0.8"/></svg>
<div class="t" style="left:142px;top:491px;font-size:11px;color:#333">コントラストツマミ</div>
<div style="position:absolute;left:84px;top:510px;width:86px;height:20px;background:#efefef"></div>
<svg width="17" height="12" viewBox="0 0 17 12" style="position:absolute;left:86px;top:514px"><path d="M0.8 6Q8.5 -2 16.2 6Q8.5 14 0.8 6Z" fill="#9c9c9c"/><circle cx="8.5" cy="6" r="3.3" fill="#efefef"/><circle cx="8.5" cy="6" r="1.9" fill="#9c9c9c"/></svg>
<svg width="17" height="17" viewBox="0 0 17 17" style="position:absolute;left:111px;top:512px"><defs><linearGradient id="bg13" x1="0" x2="1"><stop offset="0" stop-color="#fff"/><stop offset="1" stop-color="#b8bcc4"/></linearGradient></defs><rect x="1.5" y="1" width="14" height="15" rx="3" fill="url(#bg13)" stroke="#333" stroke-width="1"/><path d="M2 4Q8.5 6 15 4" fill="none" stroke="#333" stroke-width="0.8"/></svg>
<div class="t" style="left:142px;top:515px;font-size:11px;color:#333">LED</div>
<div style="position:absolute;left:66px;top:534px;width:111px;height:20px;background:#efefef"></div>
<svg width="11" height="14" viewBox="0 0 11 14" style="position:absolute;left:47px;top:537px"><path d="M1.5 1.5L9.5 7L1.5 12.5Z" fill="#fff" stroke="#222" stroke-width="1.1"/></svg>
<svg width="17" height="12" viewBox="0 0 17 12" style="position:absolute;left:69px;top:538px"><path d="M0.8 6Q8.5 -2 16.2 6Q8.5 14 0.8 6Z" fill="#9c9c9c"/><circle cx="8.5" cy="6" r="3.3" fill="#efefef"/><circle cx="8.5" cy="6" r="1.9" fill="#9c9c9c"/></svg>
<svg width="17" height="14" viewBox="0 0 17 14" style="position:absolute;left:94px;top:536px"><path d="M0.5 1H6L7.5 2.5H16.5V13H0.5Z" fill="#999"/><path d="M0.5 3.5H16.5V13H0.5Z" fill="#a2a2a2"/></svg>
<div class="t" style="left:124px;top:539px;font-size:11px;color:#333">キャンバス</div>
<div style="position:absolute;left:66px;top:558px;width:98px;height:20px;background:#efefef"></div>
<svg width="11" height="14" viewBox="0 0 11 14" style="position:absolute;left:47px;top:561px"><path d="M1.5 1.5L9.5 7L1.5 12.5Z" fill="#fff" stroke="#222" stroke-width="1.1"/></svg>
<svg width="17" height="12" viewBox="0 0 17 12" style="position:absolute;left:69px;top:562px"><path d="M0.8 6Q8.5 -2 16.2 6Q8.5 14 0.8 6Z" fill="#9c9c9c"/><circle cx="8.5" cy="6" r="3.3" fill="#efefef"/><circle cx="8.5" cy="6" r="1.9" fill="#9c9c9c"/></svg>
<svg width="17" height="14" viewBox="0 0 17 14" style="position:absolute;left:94px;top:560px"><path d="M0.5 1H6L7.5 2.5H16.5V13H0.5Z" fill="#999"/><path d="M0.5 3.5H16.5V13H0.5Z" fill="#a2a2a2"/></svg>
<div class="t" style="left:124px;top:563px;font-size:11px;color:#333">スケッチ</div>
<div style="position:absolute;left:66px;top:582px;width:139px;height:20px;background:#efefef"></div>
<svg width="11" height="14" viewBox="0 0 11 14" style="position:absolute;left:47px;top:585px"><path d="M1.5 1.5L9.5 7L1.5 12.5Z" fill="#fff" stroke="#222" stroke-width="1.1"/></svg>
<svg width="17" height="12" viewBox="0 0 17 12" style="position:absolute;left:69px;top:586px"><path d="M0.8 6Q8.5 -2 16.2 6Q8.5 14 0.8 6Z" fill="#9c9c9c"/><circle cx="8.5" cy="6" r="3.3" fill="#efefef"/><circle cx="8.5" cy="6" r="1.9" fill="#9c9c9c"/></svg>
<svg width="17" height="14" viewBox="0 0 17 14" style="position:absolute;left:94px;top:584px"><path d="M0.5 1H6L7.5 2.5H16.5V13H0.5Z" fill="#999"/><path d="M0.5 3.5H16.5V13H0.5Z" fill="#a2a2a2"/></svg>
<div class="t" style="left:124px;top:587px;font-size:11px;color:#333">コンストラクション</div>
<div style="position:absolute;left:66px;top:606px;width:101px;height:20px;background:#efefef"></div>
<svg width="17" height="17" viewBox="0 0 17 17" style="position:absolute;left:68px;top:607px"><path d="M1 14V16H11L13 14V13Z" fill="#bbb"/><path d="M1 3L3 1H12V13L10 15H1Z" fill="#5aa3e0"/><path d="M1 3L3 1H12L10 3Z" fill="#8fcaf5"/><path d="M10 3L12 1V13L10 15Z" fill="#3a7fc0"/><path d="M15 14V2M13.5 4L15 1L16.5 4" fill="none" stroke="#222" stroke-width="1"/></svg>
<div class="t" style="left:99px;top:611px;font-size:11px;color:#333">押し出し3001</div>
<div style="position:absolute;left:66px;top:630px;width:105px;height:20px;background:#efefef"></div>
<svg width="17" height="17" viewBox="0 0 17 17" style="position:absolute;left:68px;top:631px"><path d="M1 14V16H11L13 14V13Z" fill="#bbb"/><path d="M1 3L3 1H12V13L10 15H1Z" fill="#5aa3e0"/><path d="M1 3L3 1H12L10 3Z" fill="#8fcaf5"/><path d="M10 3L12 1V13L10 15Z" fill="#3a7fc0"/><path d="M15 14V2M13.5 4L15 1L16.5 4" fill="none" stroke="#222" stroke-width="1"/></svg>
<div class="t" style="left:99px;top:635px;font-size:11px;color:#333">押し出し3002</div>
<div style="position:absolute;left:66px;top:654px;width:105px;height:20px;background:#efefef"></div>
<svg width="17" height="17" viewBox="0 0 17 17" style="position:absolute;left:68px;top:655px"><path d="M1 4L4 1H9A7 7 0 0 1 16 8V13L13 16H1Z" fill="#ddd" stroke="#444" stroke-width="0.9"/><path d="M8 1H9A7 7 0 0 1 16 8V10L14 12A7 7 0 0 0 8 4Z" fill="#5aa3e0"/></svg>
<div class="t" style="left:99px;top:659px;font-size:11px;color:#333">フィレット3004</div>
<div style="position:absolute;left:66px;top:678px;width:105px;height:20px;background:#efefef"></div>
<svg width="17" height="17" viewBox="0 0 17 17" style="position:absolute;left:68px;top:679px"><path d="M1 14V16H11L13 14V13Z" fill="#bbb"/><path d="M1 3L3 1H12V13L10 15H1Z" fill="#5aa3e0"/><path d="M1 3L3 1H12L10 3Z" fill="#8fcaf5"/><path d="M10 3L12 1V13L10 15Z" fill="#3a7fc0"/><path d="M15 14V2M13.5 4L15 1L16.5 4" fill="none" stroke="#222" stroke-width="1"/></svg>
<div class="t" style="left:99px;top:683px;font-size:11px;color:#333">押し出し3005</div>
<div style="position:absolute;left:66px;top:702px;width:102px;height:20px;background:#efefef"></div>
<svg width="17" height="17" viewBox="0 0 17 17" style="position:absolute;left:68px;top:703px"><path d="M1 14V16H11L13 14V13Z" fill="#bbb"/><path d="M1 3L3 1H12V13L10 15H1Z" fill="#5aa3e0"/><path d="M1 3L3 1H12L10 3Z" fill="#8fcaf5"/><path d="M10 3L12 1V13L10 15Z" fill="#3a7fc0"/><path d="M15 14V2M13.5 4L15 1L16.5 4" fill="none" stroke="#222" stroke-width="1"/></svg>
<div class="t" style="left:99px;top:707px;font-size:11px;color:#333">押し出し3021</div>
<div style="position:absolute;left:66px;top:726px;width:106px;height:20px;background:#efefef"></div>
<svg width="17" height="17" viewBox="0 0 17 17" style="position:absolute;left:68px;top:727px"><path d="M1 4L4 1H9A7 7 0 0 1 16 8V13L13 16H1Z" fill="#ddd" stroke="#444" stroke-width="0.9"/><path d="M8 1H9A7 7 0 0 1 16 8V10L14 12A7 7 0 0 0 8 4Z" fill="#5aa3e0"/></svg>
<div class="t" style="left:99px;top:731px;font-size:11px;color:#333">フィレット3022</div>
<div style="position:absolute;left:66px;top:750px;width:106px;height:20px;background:#efefef"></div>
<svg width="17" height="17" viewBox="0 0 17 17" style="position:absolute;left:68px;top:751px"><path d="M1 14V16H11L13 14V13Z" fill="#bbb"/><path d="M1 3L3 1H12V13L10 15H1Z" fill="#5aa3e0"/><path d="M1 3L3 1H12L10 3Z" fill="#8fcaf5"/><path d="M10 3L12 1V13L10 15Z" fill="#3a7fc0"/><path d="M15 14V2M13.5 4L15 1L16.5 4" fill="none" stroke="#222" stroke-width="1"/></svg>
<div class="t" style="left:99px;top:755px;font-size:11px;color:#333">押し出し3023</div>
<div style="position:absolute;left:66px;top:774px;width:106px;height:20px;background:#efefef"></div>
<svg width="17" height="17" viewBox="0 0 17 17" style="position:absolute;left:68px;top:775px"><path d="M1 14V16H11L13 14V13Z" fill="#bbb"/><path d="M1 3L3 1H12V13L10 15H1Z" fill="#5aa3e0"/><path d="M1 3L3 1H12L10 3Z" fill="#8fcaf5"/><path d="M10 3L12 1V13L10 15Z" fill="#3a7fc0"/><path d="M15 14V2M13.5 4L15 1L16.5 4" fill="none" stroke="#222" stroke-width="1"/></svg>
<div class="t" style="left:99px;top:779px;font-size:11px;color:#333">押し出し3027</div>
<div style="position:absolute;left:66px;top:798px;width:106px;height:20px;background:#efefef"></div>
<svg width="17" height="17" viewBox="0 0 17 17" style="position:absolute;left:68px;top:799px"><path d="M1 14V16H11L13 14V13Z" fill="#bbb"/><path d="M1 3L3 1H12V13L10 15H1Z" fill="#5aa3e0"/><path d="M1 3L3 1H12L10 3Z" fill="#8fcaf5"/><path d="M10 3L12 1V13L10 15Z" fill="#3a7fc0"/><path d="M15 14V2M13.5 4L15 1L16.5 4" fill="none" stroke="#222" stroke-width="1"/></svg>
<div class="t" style="left:99px;top:803px;font-size:11px;color:#333">押し出し3028</div>
<div style="position:absolute;left:66px;top:822px;width:106px;height:20px;background:#efefef"></div>
<svg width="17" height="17" viewBox="0 0 17 17" style="position:absolute;left:68px;top:823px"><path d="M1 14V16H11L13 14V13Z" fill="#bbb"/><path d="M1 3L3 1H12V13L10 15H1Z" fill="#5aa3e0"/><path d="M1 3L3 1H12L10 3Z" fill="#8fcaf5"/><path d="M10 3L12 1V13L10 15Z" fill="#3a7fc0"/><path d="M15 14V2M13.5 4L15 1L16.5 4" fill="none" stroke="#222" stroke-width="1"/></svg>
<div class="t" style="left:99px;top:827px;font-size:11px;color:#333">押し出し3029</div>
<div style="position:absolute;left:66px;top:846px;width:106px;height:20px;background:#efefef"></div>
<svg width="17" height="17" viewBox="0 0 17 17" style="position:absolute;left:68px;top:847px"><path d="M1 4L4 1H9A7 7 0 0 1 16 8V13L13 16H1Z" fill="#ddd" stroke="#444" stroke-width="0.9"/><path d="M8 1H9A7 7 0 0 1 16 8V10L14 12A7 7 0 0 0 8 4Z" fill="#5aa3e0"/></svg>
<div class="t" style="left:99px;top:851px;font-size:11px;color:#333">フィレット3030</div>
<div style="position:absolute;left:66px;top:870px;width:102px;height:20px;background:#efefef"></div>
<svg width="17" height="17" viewBox="0 0 17 17" style="position:absolute;left:68px;top:871px"><path d="M1 14V16H11L13 14V13Z" fill="#bbb"/><path d="M1 3L3 1H12V13L10 15H1Z" fill="#5aa3e0"/><path d="M1 3L3 1H12L10 3Z" fill="#8fcaf5"/><path d="M10 3L12 1V13L10 15Z" fill="#3a7fc0"/><path d="M15 14V2M13.5 4L15 1L16.5 4" fill="none" stroke="#222" stroke-width="1"/></svg>
<div class="t" style="left:99px;top:875px;font-size:11px;color:#333">押し出し3031</div>
<div style="position:absolute;left:66px;top:894px;width:106px;height:20px;background:#efefef"></div>
<svg width="17" height="17" viewBox="0 0 17 17" style="position:absolute;left:68px;top:895px"><path d="M1 14V16H11L13 14V13Z" fill="#bbb"/><path d="M1 3L3 1H12V13L10 15H1Z" fill="#5aa3e0"/><path d="M1 3L3 1H12L10 3Z" fill="#8fcaf5"/><path d="M10 3L12 1V13L10 15Z" fill="#3a7fc0"/><path d="M15 14V2M13.5 4L15 1L16.5 4" fill="none" stroke="#222" stroke-width="1"/></svg>
<div class="t" style="left:99px;top:899px;font-size:11px;color:#333">押し出し3032</div>
<div style="position:absolute;left:66px;top:918px;width:106px;height:20px;background:#efefef"></div>
<svg width="17" height="17" viewBox="0 0 17 17" style="position:absolute;left:68px;top:919px"><path d="M1 4L4 1H9A7 7 0 0 1 16 8V13L13 16H1Z" fill="#ddd" stroke="#444" stroke-width="0.9"/><path d="M8 1H9A7 7 0 0 1 16 8V10L14 12A7 7 0 0 0 8 4Z" fill="#5aa3e0"/></svg>
<div class="t" style="left:99px;top:923px;font-size:11px;color:#333">フィレット3033</div>
<div style="position:absolute;left:66px;top:942px;width:106px;height:20px;background:#efefef"></div>
<svg width="17" height="17" viewBox="0 0 17 17" style="position:absolute;left:68px;top:943px"><path d="M1 14V16H11L13 14V13Z" fill="#bbb"/><path d="M1 3L3 1H12V13L10 15H1Z" fill="#5aa3e0"/><path d="M1 3L3 1H12L10 3Z" fill="#8fcaf5"/><path d="M10 3L12 1V13L10 15Z" fill="#3a7fc0"/><path d="M15 14V2M13.5 4L15 1L16.5 4" fill="none" stroke="#222" stroke-width="1"/></svg>
<div class="t" style="left:99px;top:947px;font-size:11px;color:#333">押し出し3034</div>
<div style="position:absolute;left:66px;top:966px;width:90px;height:20px;background:#efefef"></div>
<svg width="17" height="17" viewBox="0 0 17 17" style="position:absolute;left:68px;top:967px"><path d="M1 16V7L6 2H9L5 16Z" fill="#ddd" stroke="#444" stroke-width="0.9"/><path d="M7 4L11 2L15 13L11 15Z" fill="#5aa3e0"/><path d="M12 1L15 8" stroke="#222" stroke-width="0.9"/></svg>
<div class="t" style="left:99px;top:971px;font-size:11px;color:#333">勾配3036</div>
<div style="position:absolute;left:66px;top:990px;width:106px;height:20px;background:#efefef"></div>
<svg width="17" height="17" viewBox="0 0 17 17" style="position:absolute;left:68px;top:991px"><path d="M1 14V16H11L13 14V13Z" fill="#bbb"/><path d="M1 3L3 1H12V13L10 15H1Z" fill="#5aa3e0"/><path d="M1 3L3 1H12L10 3Z" fill="#8fcaf5"/><path d="M10 3L12 1V13L10 15Z" fill="#3a7fc0"/><path d="M15 14V2M13.5 4L15 1L16.5 4" fill="none" stroke="#222" stroke-width="1"/></svg>
<div class="t" style="left:99px;top:995px;font-size:11px;color:#333">押し出し3037</div>
<div style="position:absolute;left:66px;top:1014px;width:90px;height:20px;background:#efefef"></div>
<svg width="17" height="17" viewBox="0 0 17 17" style="position:absolute;left:68px;top:1015px"><path d="M1 16V7L6 2H9L5 16Z" fill="#ddd" stroke="#444" stroke-width="0.9"/><path d="M7 4L11 2L15 13L11 15Z" fill="#5aa3e0"/><path d="M12 1L15 8" stroke="#222" stroke-width="0.9"/></svg>
<div class="t" style="left:99px;top:1019px;font-size:11px;color:#333">勾配3038</div>
<div style="position:absolute;left:66px;top:1038px;width:106px;height:20px;background:#efefef"></div>
<svg width="17" height="17" viewBox="0 0 17 17" style="position:absolute;left:68px;top:1039px"><path d="M1 14V16H11L13 14V13Z" fill="#bbb"/><path d="M1 3L3 1H12V13L10 15H1Z" fill="#5aa3e0"/><path d="M1 3L3 1H12L10 3Z" fill="#8fcaf5"/><path d="M10 3L12 1V13L10 15Z" fill="#3a7fc0"/><path d="M15 14V2M13.5 4L15 1L16.5 4" fill="none" stroke="#222" stroke-width="1"/></svg>
<div class="t" style="left:99px;top:1043px;font-size:11px;color:#333">押し出し3039</div>
<div style="position:absolute;left:66px;top:1062px;width:106px;height:20px;background:#efefef"></div>
<svg width="17" height="17" viewBox="0 0 17 17" style="position:absolute;left:68px;top:1063px"><path d="M1 14V16H11L13 14V13Z" fill="#bbb"/><path d="M1 3L3 1H12V13L10 15H1Z" fill="#5aa3e0"/><path d="M1 3L3 1H12L10 3Z" fill="#8fcaf5"/><path d="M10 3L12 1V13L10 15Z" fill="#3a7fc0"/><path d="M15 14V2M13.5 4L15 1L16.5 4" fill="none" stroke="#222" stroke-width="1"/></svg>
<div class="t" style="left:99px;top:1067px;font-size:11px;color:#333">押し出し3040</div>
<div style="position:absolute;left:66px;top:1086px;width:106px;height:20px;background:#efefef"></div>
<svg width="17" height="17" viewBox="0 0 17 17" style="position:absolute;left:68px;top:1087px"><path d="M1 14V16H11L13 14V13Z" fill="#bbb"/><path d="M1 3L3 1H12V13L10 15H1Z" fill="#5aa3e0"/><path d="M1 3L3 1H12L10 3Z" fill="#8fcaf5"/><path d="M10 3L12 1V13L10 15Z" fill="#3a7fc0"/><path d="M15 14V2M13.5 4L15 1L16.5 4" fill="none" stroke="#222" stroke-width="1"/></svg>
<div class="t" style="left:99px;top:1091px;font-size:11px;color:#333">押し出し3045</div>
<div style="position:absolute;left:12px;top:1131px;width:300px;height:25px;background:#f2f2f2;border:1px solid #c9c9c9;box-sizing:border-box"></div>
<div class="t" style="left:37px;top:1138px;font-size:11px;color:#666">コメント</div>
<svg width="11" height="11" viewBox="0 0 11 11" style="position:absolute;left:290px;top:1138px"><circle cx="5.5" cy="5.5" r="5" fill="#222"/><path d="M2.8 5.5H8.2M5.5 2.8V8.2" stroke="#fff" stroke-width="1.5"/></svg>
<div style="position:absolute;left:850px;top:1130px;width:237px;height:23px;background:#efefef"></div>
<svg width="237" height="23" viewBox="0 0 237 23" style="position:absolute;left:850px;top:1130px"><path d="M11 20V4M8 7L11 3L14 7" fill="none" stroke="#222" stroke-width="1.3"/><ellipse cx="11" cy="13" rx="7" ry="3.5" fill="none" stroke="#222" stroke-width="1.2"/><path d="M4 13L2.5 16L6 16Z" fill="#222"/><path d="M26 10H31L28.5 13Z" fill="#222"/><path d="M37 9L40 6L43 8L47 5V9H51V19H37Z" fill="#e8e8e8" stroke="#444" stroke-width="1.1"/><rect x="40" y="12" width="8" height="4" fill="#9aa" stroke="#444" stroke-width="0.8"/><path d="M63 20Q58 16 57 13Q56 11 58 11L61 14V5Q61 4 62 4Q63 4 63 5V12V3Q63 2 64.5 2Q66 2 66 3V12V4Q66 3 67 3Q68.5 3 68.5 4V12V6Q68.5 5 69.5 5Q71 5 71 6V15Q71 19 67 20Z" fill="#eee" stroke="#333" stroke-width="0.9"/><circle cx="93" cy="12" r="5" fill="#dfe8ec" stroke="#333" stroke-width="1.2"/><path d="M96.5 15.5L100 19" stroke="#333" stroke-width="2.4"/><path d="M100 4H105M102.5 1.5V6.5M100 8H105" stroke="#222" stroke-width="0.9"/><rect x="114" y="4" width="15" height="15" fill="none" stroke="#444" stroke-dasharray="2 1.5" stroke-width="0.9"/><circle cx="120" cy="11" r="5.5" fill="#dfe8ec" stroke="#333" stroke-width="1.2"/><path d="M124 15L128 19" stroke="#333" stroke-width="2.4"/><path d="M135 10H140L137.5 13Z" fill="#222"/><rect x="147" y="4" width="16" height="12" rx="1" fill="#8fb3e0" stroke="#444" stroke-width="1.1"/><path d="M152 19H158M155 16V19" stroke="#444" stroke-width="1.2"/><path d="M166 10H171L168.5 13Z" fill="#222"/><rect x="178" y="4" width="15" height="15" fill="#eee" stroke="#444" stroke-width="1.1"/><path d="M181.75 4V19M185.5 4V19M189.25 4V19M178 7.75H193M178 11.5H193M178 15.25H193" stroke="#666" stroke-width="0.8"/><path d="M197 10H202L199.5 13Z" fill="#222"/><rect x="209" y="4" width="15" height="15" fill="#fff" stroke="#2a4a9a" stroke-width="1.2"/><path d="M216.5 4V19M209 11.5H224" stroke="#2a4a9a" stroke-width="1.2"/><rect x="211" y="6" width="4" height="4" fill="#9bc"/><rect x="218" y="6" width="4" height="4" fill="#9bc"/><rect x="211" y="13" width="4" height="4" fill="#9bc"/><rect x="218" y="13" width="4" height="4" fill="#9bc"/><path d="M229 10H234L231.5 13Z" fill="#222"/></svg>
<div style="position:absolute;left:8px;top:55px;width:1920px;height:82px;background:#f2f2f2;border-bottom:1px solid #dedede;box-sizing:border-box"></div>
<div style="position:absolute;left:8px;top:137px;width:1920px;height:3px;background:#f2f2f2"></div>
<div style="position:absolute;left:20px;top:66px;width:109px;height:60px;border:1.5px solid #d6d6d6;border-radius:6px;box-sizing:border-box"></div>
<div class="t" style="left:52px;top:90px;font-size:11.5px;color:#222">デザイン</div>
<svg width="7" height="5" viewBox="0 0 7 5" style="position:absolute;left:93px;top:94px"><path d="M0 0H7L3.5 4.5Z" fill="#222"/></svg>
<div class="t" style="left:158px;top:60px;font-size:11px;color:#0a8fd0">ソリッド</div>
<div class="t" style="left:236px;top:60px;font-size:11px;color:#333">サーフェス</div>
<div class="t" style="left:319px;top:60px;font-size:11px;color:#333">メッシュ</div>
<div class="t" style="left:397px;top:60px;font-size:11px;color:#333">フォーム</div>
<div class="t" style="left:475px;top:60px;font-size:11px;color:#333">シート メタル</div>
<div class="t" style="left:573px;top:60px;font-size:11px;color:#333">プラスチック</div>
<div class="t" style="left:666px;top:60px;font-size:11px;color:#333">ユーティリティ</div>
<div style="position:absolute;left:146px;top:76px;width:56px;height:3px;background:#0696d7;border-radius:1px"></div>
<div style="position:absolute;left:359px;top:81px;width:1px;height:51px;background:#d9d9d9"></div>
<div style="position:absolute;left:628px;top:81px;width:1px;height:51px;background:#d9d9d9"></div>
<div style="position:absolute;left:725px;top:81px;width:1px;height:51px;background:#d9d9d9"></div>
<div style="position:absolute;left:849px;top:81px;width:1px;height:51px;background:#d9d9d9"></div>
<div style="position:absolute;left:908px;top:81px;width:1px;height:51px;background:#d9d9d9"></div>
<div style="position:absolute;left:967px;top:81px;width:1px;height:51px;background:#d9d9d9"></div>
<div style="position:absolute;left:1063px;top:81px;width:1px;height:51px;background:#d9d9d9"></div>
<div class="t" style="left:230px;top:121px;font-size:11px;color:#333">作成</div>
<svg width="7" height="5" viewBox="0 0 7 5" style="position:absolute;left:255px;top:125px"><path d="M0 0H7L3.5 4.5Z" fill="#222"/></svg>
<div class="t" style="left:476px;top:121px;font-size:11px;color:#333">修正</div>
<svg width="7" height="5" viewBox="0 0 7 5" style="position:absolute;left:501px;top:125px"><path d="M0 0H7L3.5 4.5Z" fill="#222"/></svg>
<div class="t" style="left:650px;top:121px;font-size:11px;color:#333">アセンブリ</div>
<svg width="7" height="5" viewBox="0 0 7 5" style="position:absolute;left:695px;top:125px"><path d="M0 0H7L3.5 4.5Z" fill="#222"/></svg>
<div class="t" style="left:739px;top:121px;font-size:11px;color:#333">コンフィギュレーション</div>
<svg width="7" height="5" viewBox="0 0 7 5" style="position:absolute;left:828px;top:125px"><path d="M0 0H7L3.5 4.5Z" fill="#222"/></svg>
<div class="t" style="left:864px;top:121px;font-size:11px;color:#333">構築</div>
<svg width="7" height="5" viewBox="0 0 7 5" style="position:absolute;left:889px;top:125px"><path d="M0 0H7L3.5 4.5Z" fill="#222"/></svg>
<div class="t" style="left:922px;top:121px;font-size:11px;color:#333">検査</div>
<svg width="7" height="5" viewBox="0 0 7 5" style="position:absolute;left:947px;top:125px"><path d="M0 0H7L3.5 4.5Z" fill="#222"/></svg>
<div class="t" style="left:998px;top:121px;font-size:11px;color:#333">挿入</div>
<svg width="7" height="5" viewBox="0 0 7 5" style="position:absolute;left:1022px;top:125px"><path d="M0 0H7L3.5 4.5Z" fill="#222"/></svg>
<div class="t" style="left:1078px;top:121px;font-size:11px;color:#333">選択</div>
<svg width="7" height="5" viewBox="0 0 7 5" style="position:absolute;left:1102px;top:125px"><path d="M0 0H7L3.5 4.5Z" fill="#222"/></svg>
<svg width="34" height="34" viewBox="0 0 34 34" style="position:absolute;left:144px;top:81px"><rect x="1.5" y="2.5" width="27" height="27" fill="none" stroke="#444" stroke-width="1"/><rect x="0" y="1" width="3" height="3" fill="#444"/><rect x="27" y="1" width="3" height="3" fill="#444"/><rect x="0" y="28" width="3" height="3" fill="#444"/><rect x="7" y="8" width="3" height="3" fill="#444"/><rect x="20" y="8" width="3" height="3" fill="#444"/><rect x="7" y="19" width="3" height="3" fill="#444"/><path d="M9 10V20M9 10H21M21 10C21 16 16 20 9 21" fill="none" stroke="#444"/><path d="M22 20V33M15.5 26.5H28.5" stroke="#1aa33a" stroke-width="4"/></svg>
<svg width="34" height="34" viewBox="0 0 34 34" style="position:absolute;left:189px;top:81px"><path d="M1 27V31H22L26 27V24Z" fill="#bbb"/><path d="M1 6L6 1H25V24L20 28H1Z" fill="#6aaee6"/><path d="M1 6L6 1H25L20 6Z" fill="#8fcaf5"/><path d="M20 6L25 1V24L20 28Z" fill="#3f88cc"/><path d="M29.5 31V3M26.5 7L29.5 2L32.5 7" fill="none" stroke="#222" stroke-width="1.3"/></svg>
<svg width="34" height="34" viewBox="0 0 34 34" style="position:absolute;left:231px;top:81px"><path d="M2 13Q16 3 30 13" fill="none" stroke="#333" stroke-width="1"/><path d="M1 11L4 15L6 10Z" fill="#333"/><path d="M1 20Q15 9 28 20V27Q15 17 4 29Z" fill="#6aaee6"/><path d="M1 20Q15 9 28 20L26 22Q15 13 4 23Z" fill="#8fcaf5"/><path d="M28 20L32 17V25L28 28Z" fill="#fff" stroke="#333" stroke-width="0.8"/></svg>
<svg width="34" height="34" viewBox="0 0 34 34" style="position:absolute;left:273px;top:81px"><path d="M1 8L7 2H33V27L27 33H1Z" fill="#d6d6d6" stroke="#555" stroke-width="0.8"/><path d="M27 8L33 2V27L27 33Z" fill="#b0b0b0"/><circle cx="14" cy="19" r="8.5" fill="#fff" stroke="#444"/><circle cx="14" cy="19" r="6.5" fill="#6aaee6"/><path d="M12 13A6 6 0 0 0 20 19A7 7 0 0 1 12 13Z" fill="#fff"/></svg>
<svg width="34" height="34" viewBox="0 0 34 34" style="position:absolute;left:316px;top:81px"><rect x="1" y="2" width="6" height="6" fill="#fff" stroke="#444" stroke-width="0.8"/><rect x="22" y="2" width="6" height="6" fill="#6aaee6"/><rect x="1" y="24" width="6" height="6" fill="#6aaee6"/><rect x="22" y="24" width="6" height="6" fill="#6aaee6"/><path d="M7 5H22M4 8V24M7 27H22" stroke="#444" stroke-width="0.8"/></svg>
<svg width="34" height="34" viewBox="0 0 34 34" style="position:absolute;left:371px;top:81px"><path d="M1 4L4 1H9V31H1Z" fill="#d6d6d6" stroke="#555" stroke-width="0.8"/><path d="M8 4L12 1H22V28L18 31H8Z" fill="#6aaee6"/><path d="M18 4L22 1V28L18 31Z" fill="#3f88cc"/><path d="M18 16H29M26 13L30 16L26 19" fill="none" stroke="#222" stroke-width="1.2"/></svg>
<svg width="34" height="34" viewBox="0 0 34 34" style="position:absolute;left:414px;top:81px"><path d="M1 6L6 1H18A14 14 0 0 1 31 14V26L26 31H1Z" fill="#d6d6d6" stroke="#555" stroke-width="0.8"/><path d="M14 1H18A14 14 0 0 1 31 14V18L27 22A14 14 0 0 0 14 6Z" fill="#6aaee6"/></svg>
<svg width="34" height="34" viewBox="0 0 34 34" style="position:absolute;left:457px;top:81px"><path d="M1 5L5 1H32V27L28 31H1Z" fill="#d6d6d6" stroke="#555" stroke-width="0.8"/><path d="M28 5L32 1V27L28 31Z" fill="#b0b0b0"/><rect x="4" y="8" width="21" height="20" fill="#eee"/><path d="M6 11H10V22H22V26H6Z" fill="#3f88cc"/><path d="M10 22H22V26H10Z" fill="#8fcaf5"/></svg>
<svg width="34" height="34" viewBox="0 0 34 34" style="position:absolute;left:500px;top:81px"><path d="M1 14L4 11H11V4L15 1H32V22L28 26H21V31H1Z" fill="#6aaee6"/><path d="M11 4L15 1H32L28 4Z" fill="#8fcaf5"/><path d="M28 4L32 1V22L28 26Z" fill="#3f88cc"/><path d="M21 26L24 23V28L21 31Z" fill="#3f88cc"/></svg>
<svg width="34" height="34" viewBox="0 0 34 34" style="position:absolute;left:543px;top:81px"><path d="M1 4L4 1H28V13L25 16H1Z" fill="#6aaee6"/><path d="M1 4L4 1H28L25 4Z" fill="#8fcaf5"/><path d="M0 19L4 18H26L31 13" fill="none" stroke="#1e8ad6" stroke-width="1.2"/><path d="M1 22H25L28 19V30L25 33H1Z" fill="#d6d6d6" stroke="#555" stroke-width="0.6"/></svg>
<svg width="34" height="34" viewBox="0 0 34 34" style="position:absolute;left:585px;top:81px"><path d="M17 1L22 7H19V15H27V12L33 17L27 22V19H19V27H22L17 33L12 27H15V19H7V22L1 17L7 12V15H15V7H12Z" fill="#222"/></svg>
<svg width="34" height="34" viewBox="0 0 34 34" style="position:absolute;left:640px;top:81px"><path d="M1 17H16V32H1Z" fill="#d6d6d6" stroke="#777" stroke-width="0.6"/><path d="M14 20L18 17H30V28L26 32H14Z" fill="#d6d6d6" stroke="#777" stroke-width="0.6"/><path d="M1 5L4 2H16V17H1Z" fill="#6aaee6"/><path d="M1 5L4 2H16L13 5Z" fill="#8fcaf5"/><path d="M23 1L25 6L30 4L27 9L32 11L27 13L30 18L25 16L23 21L21 16L16 18L19 13L14 11L19 9L16 4L21 6Z" fill="#f2a20c"/></svg>
<svg width="34" height="34" viewBox="0 0 34 34" style="position:absolute;left:685px;top:81px"><path d="M3 8Q4 2 8 2Q12 2 12 6V28L4 32Q2 30 2 26Z" fill="#d6d6d6" stroke="#666" stroke-width="0.7"/><path d="M16 14L21 10L30 18V32L16 26Z" fill="#d6d6d6" stroke="#666" stroke-width="0.7"/><path d="M9 16V24M18 8V15" stroke="#2a8ee0" stroke-width="1.2"/></svg>
<svg width="34" height="34" viewBox="0 0 34 34" style="position:absolute;left:750px;top:81px"><path d="M1 7L6 2H22V23H1Z" fill="#ececec" stroke="#e0e0e0"/><circle cx="24" cy="8" r="7" fill="#c8def0"/><path d="M24 4L27 8H25V12H23V8H21Z" fill="#fff"/><path d="M19 23H33M19 28H33M24 20V26M28 25V31" stroke="#dcdcdc" stroke-width="1.5"/></svg>
<svg width="34" height="34" viewBox="0 0 34 34" style="position:absolute;left:793px;top:81px"><rect x="1" y="2" width="22" height="22" fill="#ececec" stroke="#e0e0e0"/><path d="M3 8H21M3 14H21M3 20H21M8 5V24M14 5V24" stroke="#dcdcdc"/><circle cx="24" cy="8" r="7" fill="#c8def0"/><path d="M24 4L27 8H25V12H23V8H21Z" fill="#fff"/><path d="M19 23H33M19 28H33M24 20V26M28 25V31" stroke="#dcdcdc" stroke-width="1.5"/></svg>
<svg width="34" height="34" viewBox="0 0 34 34" style="position:absolute;left:863px;top:81px"><path d="M1 10L6 3V32H1Z" fill="#d6d6d6" stroke="#555" stroke-width="0.7"/><path d="M6 10L16 3V26L6 32Z" fill="#5cc47a" stroke="#444" stroke-width="0.6"/><path d="M22 10L31 3V26L22 32Z" fill="#e0956a"/></svg>
<svg width="34" height="34" viewBox="0 0 34 34" style="position:absolute;left:922px;top:81px"><path d="M2 10H30M6 7L2 10L6 13M26 7L30 10L26 13M2 5V15M30 5V15" fill="none" stroke="#333" stroke-width="1"/><rect x="2" y="18" width="29" height="6" fill="#f5a800"/><path d="M5 18V20M9 18V21M13 18V20M17 18V21M21 18V20M25 18V21" stroke="#a06800" stroke-width="0.8"/></svg>
<svg width="34" height="34" viewBox="0 0 34 34" style="position:absolute;left:978px;top:81px"><path d="M6 12L10 8H28V25L24 29H6Z" fill="#d6d6d6" stroke="#555" stroke-width="0.7"/><path d="M24 12L28 8V25L24 29Z" fill="#b0b0b0"/><path d="M1 6H10V2L17 7L10 12V9H1Z" fill="#1b8ae6"/><path d="M17 27Q19 22 23 24M21 30Q26 31 28 25" fill="none" stroke="#222" stroke-width="2.5"/></svg>
<svg width="34" height="34" viewBox="0 0 34 34" style="position:absolute;left:1023px;top:81px"><rect x="1" y="3" width="29" height="28" fill="#7ec8f7"/><path d="M1 31V20Q7 12 13 20Q18 26 22 22Q26 19 30 25V31Z" fill="#3c8fd0"/><circle cx="21" cy="10" r="3" fill="#fff6c0"/></svg>
<div style="position:absolute;left:1075px;top:79px;width:38px;height:38px;background:#0f96d8"></div>
<svg width="38" height="38" viewBox="0 0 38 38" style="position:absolute;left:1075px;top:79px"><circle cx="18" cy="17" r="12" fill="none" stroke="#6ee08a" stroke-width="1" stroke-dasharray="3 2.5"/><path d="M25 20V34L28 31L31 37L33 36L30 30H35Z" fill="#fff"/></svg>
<div style="position:absolute;left:8px;top:23px;width:1920px;height:32px;background:#cbcbcb"></div>
<svg width="190" height="32" style="position:absolute;left:8px;top:23px" viewBox="0 0 190 32"><g fill="#555"><rect x="9" y="9" width="3.6" height="3.6" rx="0.5"/><rect x="9" y="14" width="3.6" height="3.6" rx="0.5"/><rect x="9" y="19" width="3.6" height="3.6" rx="0.5"/><rect x="14" y="9" width="3.6" height="3.6" rx="0.5"/><rect x="14" y="14" width="3.6" height="3.6" rx="0.5"/><rect x="14" y="19" width="3.6" height="3.6" rx="0.5"/><rect x="19" y="9" width="3.6" height="3.6" rx="0.5"/><rect x="19" y="14" width="3.6" height="3.6" rx="0.5"/><rect x="19" y="19" width="3.6" height="3.6" rx="0.5"/></g><path d="M42 8H49L54 13V24H42Z" fill="#555"/><path d="M49 8V13H54" fill="#aaa"/><path d="M62 14H68L65 17.5Z" fill="#555"/><path d="M87 9H97L100 12V23H87Z" fill="#999"/><rect x="90" y="10" width="6" height="4" fill="#cbcbcb"/><rect x="90" y="18" width="7" height="5" fill="#cbcbcb"/><path d="M122 15H129Q133.5 15 133.5 19.5V22" fill="none" stroke="#555" stroke-width="1.8"/><path d="M126 10.5L121.5 15L126 19.5" fill="none" stroke="#555" stroke-width="1.8"/><path d="M139 14H145L142 17.5Z" fill="#555"/><path d="M171 15H164Q159.5 15 159.5 19.5V22" fill="none" stroke="#999" stroke-width="1.8"/><path d="M167 10.5L171.5 15L167 19.5" fill="none" stroke="#999" stroke-width="1.8"/><path d="M179 14H185L182 17.5Z" fill="#999"/></svg>
<div style="position:absolute;left:202px;top:27px;width:366px;height:28px;background:#bababa;border-radius:5px 5px 0 0"></div>
<div class="t" style="left:328px;top:35px;font-size:12.3px;color:#444">PC-9801U2_open2 v3</div>
<svg width="15" height="16" viewBox="0 0 15 16" style="position:absolute;left:310px;top:34px"><path d="M7.5 0.5L14.5 4.2V11.8L7.5 15.5L0.5 11.8V4.2Z" fill="#ff7a1a"/><path d="M7.5 0.5L14.5 4.2L7.5 8L0.5 4.2Z" fill="#ffb070"/><path d="M0.5 4.2L7.5 8V15.5L0.5 11.8Z" fill="#ff9a4a"/></svg>
<svg width="10" height="10" viewBox="0 0 10 10" style="position:absolute;left:553px;top:36px"><path d="M1 1L9 9M9 1L1 9" stroke="#666" stroke-width="1.3"/></svg>
<div style="position:absolute;left:572px;top:27px;width:366px;height:28px;background:#bababa;border-radius:5px 5px 0 0"></div>
<div class="t" style="left:745px;top:35px;font-size:12.3px;color:#444">無題*</div>
<svg width="12" height="14" style="position:absolute;left:726px;top:34px" viewBox="0 0 12 14"><path d="M3 6V4A3 3 0 0 1 9 4V6" fill="none" stroke="#777" stroke-width="1.5"/><rect x="1" y="6" width="10" height="8" rx="1" fill="#777"/><rect x="3" y="9" width="6" height="1.2" fill="#bababa"/></svg>
<svg width="10" height="10" viewBox="0 0 10 10" style="position:absolute;left:923px;top:36px"><path d="M1 1L9 9M9 1L1 9" stroke="#666" stroke-width="1.3"/></svg>
<div style="position:absolute;left:942px;top:27px;width:366px;height:28px;background:#bababa;border-radius:5px 5px 0 0"></div>
<div class="t" style="left:1069px;top:35px;font-size:12.3px;color:#444">PC-9801U2_open v2*</div>
<svg width="15" height="16" viewBox="0 0 15 16" style="position:absolute;left:1051px;top:34px"><path d="M7.5 0.5L14.5 4.2V11.8L7.5 15.5L0.5 11.8V4.2Z" fill="#ff7a1a"/><path d="M7.5 0.5L14.5 4.2L7.5 8L0.5 4.2Z" fill="#ffb070"/><path d="M0.5 4.2L7.5 8V15.5L0.5 11.8Z" fill="#ff9a4a"/></svg>
<svg width="10" height="10" viewBox="0 0 10 10" style="position:absolute;left:1293px;top:36px"><path d="M1 1L9 9M9 1L1 9" stroke="#666" stroke-width="1.3"/></svg>
<div style="position:absolute;left:1312px;top:27px;width:366px;height:28px;background:#f2f2f2;border-radius:5px 5px 0 0"></div>
<div class="t" style="left:1456px;top:35px;font-size:12.3px;color:#222">N5915_open v1</div>
<svg width="15" height="16" viewBox="0 0 15 16" style="position:absolute;left:1438px;top:34px"><path d="M7.5 0.5L14.5 4.2V11.8L7.5 15.5L0.5 11.8V4.2Z" fill="#ff7a1a"/><path d="M7.5 0.5L14.5 4.2L7.5 8L0.5 4.2Z" fill="#ffb070"/><path d="M0.5 4.2L7.5 8V15.5L0.5 11.8Z" fill="#ff9a4a"/></svg>
<svg width="10" height="10" viewBox="0 0 10 10" style="position:absolute;left:1663px;top:36px"><path d="M1 1L9 9M9 1L1 9" stroke="#555" stroke-width="1.3"/></svg>
<div style="position:absolute;left:1682px;top:27px;width:28px;height:28px;background:#bababa;border-radius:5px 5px 0 0"></div>
<svg width="14" height="14" style="position:absolute;left:1689px;top:34px" viewBox="0 0 14 14"><path d="M7 1V13M1 7H13" stroke="#666" stroke-width="2.2"/></svg>
<svg width="200" height="32" style="position:absolute;left:1718px;top:23px" viewBox="0 0 200 32"><circle cx="12" cy="15.5" r="8" fill="#1b8ae6"/><path d="M12 8.5L16 13H13.5V21H10.5V13H8Z" fill="#fff"/><circle cx="45" cy="15.5" r="6.5" fill="none" stroke="#666" stroke-width="2.5"/><path d="M47 8L51 11L46 14Z" fill="#666"/><circle cx="78" cy="15.5" r="7.5" fill="none" stroke="#666" stroke-width="1"/><circle cx="78" cy="15.5" r="6" fill="#666"/><path d="M78 11V16H82" fill="none" stroke="#cbcbcb" stroke-width="1.2"/><path d="M105 20C107 18 106 10 111 9C116 10 115 18 117 20Z" fill="#666"/><circle cx="111" cy="22" r="1.8" fill="#666"/><circle cx="115" cy="11" r="2.6" fill="#1b9ae6"/><circle cx="144" cy="15.5" r="8" fill="#666"/><text x="144" y="20" font-family="Liberation Sans" font-weight="bold" font-size="12" fill="#cbcbcb" text-anchor="middle">?</text></svg>
<svg width="26" height="26" style="position:absolute;left:1890px;top:26px" viewBox="0 0 26 26"><defs><linearGradient id="av" x1="0" y1="0" x2="0" y2="1"><stop offset="0" stop-color="#c8d2e0"/><stop offset="1" stop-color="#8a9ab0"/></linearGradient></defs><circle cx="13" cy="13" r="12" fill="url(#av)"/><path d="M13 4C17 4 18 8 17 12C16 15 15 16 16 17C20 18 22 20 23 22A12 12 0 0 1 3 22C4 20 6 18 10 17C11 16 10 15 9 12C8 8 9 4 13 4Z" fill="#566275"/></svg>
<div style="position:absolute;left:8px;top:0;width:1920px;height:23px;background:#fff"></div>
<svg width="16" height="17" style="position:absolute;left:11px;top:3px" viewBox="0 0 16 17"><rect x="0.5" y="0" width="15" height="16.5" rx="3" fill="#b84a12"/><rect x="0.5" y="0" width="15" height="13" rx="3" fill="#f26a21"/><text x="8" y="10.5" font-family="Liberation Sans" font-size="10" font-weight="bold" fill="#fff" text-anchor="middle">F</text></svg>
<div class="t" style="left:31px;top:5px;font-size:13px;color:#111">N5915_open v1 (g catsin) - Autodesk Fusion <span style="font-size:11px">個人用</span>(<span style="font-size:11px">商用利用不可</span>)</div>
<svg width="120" height="20" style="position:absolute;left:1800px;top:2px" viewBox="0 0 120 20"><path d="M7 8.5H17" stroke="#111" stroke-width="1"/><rect x="52.5" y="6.5" width="8" height="8" fill="none" stroke="#111"/><path d="M54.5 6.5V4.5H62.5V12.5H60.5" fill="none" stroke="#111"/><path d="M98 3L108 13M108 3L98 13" stroke="#111" stroke-width="1.1"/></svg>
<div style="position:absolute;left:0;top:0;width:8px;height:86px;background:#eef0f6"></div>
<div style="position:absolute;left:-6px;top:40px;width:13px;height:46px;background:#fff;border-radius:6px 6px 0 0"></div>
<div style="position:absolute;left:-8px;top:52px;width:10px;height:18px;background:#c9d6f5;border-radius:50%"></div>
<div style="position:absolute;left:0;top:86px;width:8px;height:1px;background:#d0d0d0"></div>
<div style="position:absolute;left:0;top:87px;width:8px;height:17px;background:#fff"></div>
<svg width="8" height="6" style="position:absolute;left:0;top:94px"><path d="M0 5L2 1L5 5Z" fill="#444"/></svg>
<div style="position:absolute;left:0;top:104px;width:6px;height:388px;background:#5f5f5f"></div>
<div style="position:absolute;left:6px;top:104px;width:2px;height:388px;background:#fff"></div>
<div style="position:absolute;left:0;top:492px;width:8px;height:548px;background:#fff"></div>
<svg width="8" height="6" style="position:absolute;left:0;top:1028px"><path d="M0 1H3L0 4Z" fill="#444"/></svg>
<div style="position:absolute;left:0;top:1040px;width:8px;height:128px;background:#111"></div>
<div style="position:absolute;left:0;top:1160px;width:1928px;height:8px;background:#111"></div>
<div style="position:absolute;left:56px;top:1160px;width:288px;height:8px;background:#f0f0f0"></div>
<div style="position:absolute;left:640px;top:1160px;width:48px;height:8px;background:#333"></div>
</body></html>
